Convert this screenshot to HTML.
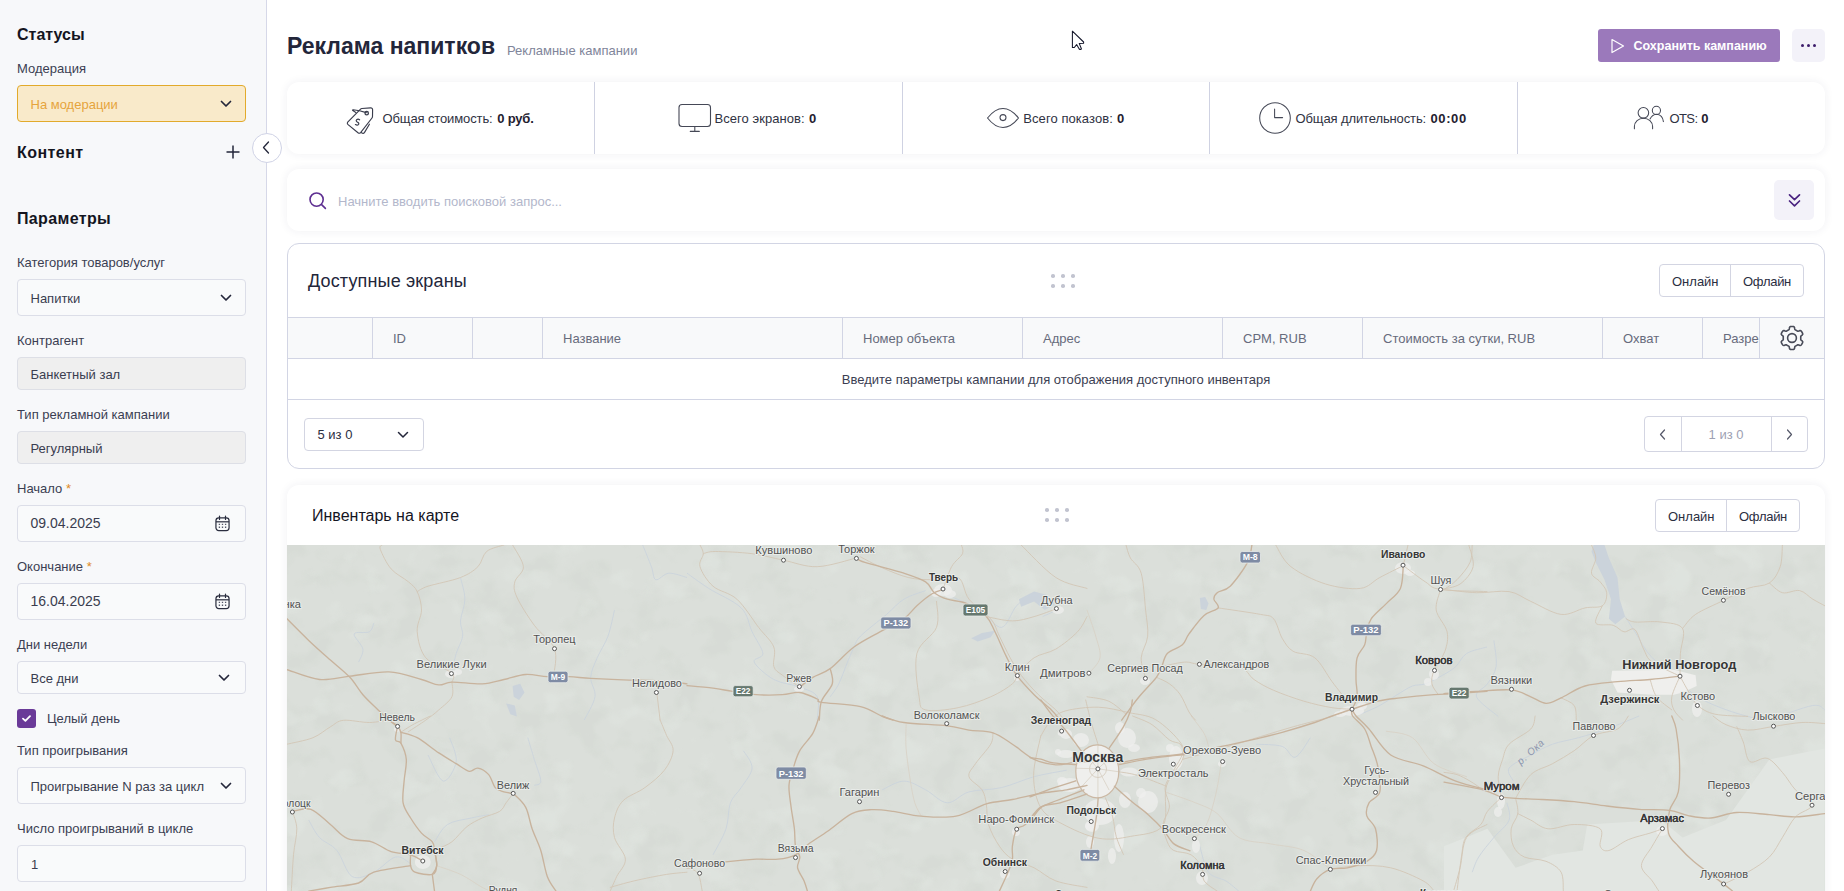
<!DOCTYPE html>
<html lang="ru">
<head>
<meta charset="utf-8">
<title>Реклама напитков</title>
<style>
*{box-sizing:border-box;margin:0;padding:0}
html,body{width:1844px;height:891px;overflow:hidden;background:#fff}
body{font-family:"Liberation Sans",sans-serif;font-size:13px;color:#2b2e3f;position:relative}
.abs{position:absolute}
.t{position:absolute;white-space:nowrap;line-height:1}
#side{position:absolute;left:0;top:0;width:267px;height:891px;background:#f7f8fa;border-right:1px solid #d6d8e8}
.h{font-size:16px;font-weight:700;color:#14151f}
.lb{font-size:13px;color:#3b3e52}
.box{position:absolute;left:17px;width:229px;border:1px solid #dcdee8;border-radius:4px;background:#f9fafb}
.box.dis{background:#efefef;border-color:#dddfe6}
.box .v{position:absolute;left:12.5px;white-space:nowrap;line-height:1;color:#3a3d4f}
.chev{position:absolute}
.req{color:#e08a1e}
/* main */
.card{position:absolute;left:287px;width:1538px;background:#fff;border-radius:12px;box-shadow:0 0 10px rgba(40,40,90,.07)}
.stat{color:#2f3242}
b.stat{color:#1f2130;font-weight:700}
.vdiv{position:absolute;top:0;width:1px;height:72px;background:#cfd2e2}
.th{position:absolute;top:0;height:40px;border-left:1px solid #d2d5e4}
.th span{position:absolute;left:20px;top:14px;line-height:1;color:#676b7c;white-space:nowrap}
.bgrp{position:absolute;height:33px;border:1px solid #d3d5e2;border-radius:4px;background:#fff}
.bgrp i{position:absolute;top:0;width:1px;height:31px;background:#d3d5e2}
.bgrp span{position:absolute;top:9.8px;line-height:1;white-space:nowrap;color:#2b2e3f;font-size:13px}
.dots{position:absolute;width:26px;height:15px}
.dots i{position:absolute;width:4.4px;height:4.4px;border-radius:40%;background:#c2c4d0}
</style>
</head>
<body>

<!-- ================= SIDEBAR ================= -->
<div id="side">
  <div class="t h" style="left:17px;top:26.8px">Статусы</div>
  <div class="t lb" style="left:17px;top:62px">Модерация</div>
  <div class="box" style="top:85px;height:37px;background:#f9eaca;border-color:#e2aa2b">
    <span class="v" style="top:11.5px;color:#e6a43c">На модерации</span>
    <svg class="chev" style="left:202px;top:14px" width="12" height="8" viewBox="0 0 12 8"><path d="M1.5 1.5 L6 6 L10.5 1.5" fill="none" stroke="#23263a" stroke-width="1.7" stroke-linecap="round" stroke-linejoin="round"/></svg>
  </div>

  <div class="t h" style="left:17px;top:145.2px;letter-spacing:0.45px">Контент</div>
  <svg class="abs" style="left:226px;top:145px" width="14" height="14" viewBox="0 0 14 14"><path d="M7 0.5V13.5M0.5 7H13.5" stroke="#23263a" stroke-width="1.5" fill="none"/></svg>

  <div class="t h" style="left:17px;top:211.2px;letter-spacing:0.36px">Параметры</div>

  <div class="t lb" style="left:17px;top:256px">Категория товаров/услуг</div>
  <div class="box" style="top:279px;height:37px">
    <span class="v" style="top:11.5px">Напитки</span>
    <svg class="chev" style="left:202px;top:14px" width="12" height="8" viewBox="0 0 12 8"><path d="M1.5 1.5 L6 6 L10.5 1.5" fill="none" stroke="#23263a" stroke-width="1.7" stroke-linecap="round" stroke-linejoin="round"/></svg>
  </div>

  <div class="t lb" style="left:17px;top:334px">Контрагент</div>
  <div class="box dis" style="top:357px;height:33px">
    <span class="v" style="top:10px">Банкетный зал</span>
  </div>

  <div class="t lb" style="left:17px;top:408px">Тип рекламной кампании</div>
  <div class="box dis" style="top:431px;height:33px">
    <span class="v" style="top:10px">Регулярный</span>
  </div>

  <div class="t lb" style="left:17px;top:482px">Начало <span class="req">*</span></div>
  <div class="box" style="top:505px;height:37px">
    <span class="v" style="top:10px;font-size:14px">09.04.2025</span>
    <svg class="abs cal" style="left:196.5px;top:9px" width="15" height="17" viewBox="0 0 16 18"><g fill="none" stroke="#2b2e3f" stroke-width="1.3"><rect x="1" y="3" width="14" height="13.5" rx="3"/><path d="M1 7.2H15"/><path d="M4.8 1V4.6M11.2 1V4.6" stroke-linecap="round"/><path d="M4 10h1.4M7.3 10h1.4M10.6 10H12M4 13h1.4M7.3 13h1.4M10.6 13H12" stroke-width="1.4" stroke="#555869"/></g></svg>
  </div>

  <div class="t lb" style="left:17px;top:560px">Окончание <span class="req">*</span></div>
  <div class="box" style="top:583px;height:37px">
    <span class="v" style="top:10px;font-size:14px">16.04.2025</span>
    <svg class="abs cal" style="left:196.5px;top:9px" width="15" height="17" viewBox="0 0 16 18"><g fill="none" stroke="#2b2e3f" stroke-width="1.3"><rect x="1" y="3" width="14" height="13.5" rx="3"/><path d="M1 7.2H15"/><path d="M4.8 1V4.6M11.2 1V4.6" stroke-linecap="round"/><path d="M4 10h1.4M7.3 10h1.4M10.6 10H12M4 13h1.4M7.3 13h1.4M10.6 13H12" stroke-width="1.4" stroke="#555869"/></g></svg>
  </div>

  <div class="t lb" style="left:17px;top:638px">Дни недели</div>
  <div class="box" style="top:661px;height:33px">
    <span class="v" style="top:10px">Все дни</span>
    <svg class="chev" style="left:200px;top:12px" width="12" height="8" viewBox="0 0 12 8"><path d="M1.5 1.5 L6 6 L10.5 1.5" fill="none" stroke="#23263a" stroke-width="1.7" stroke-linecap="round" stroke-linejoin="round"/></svg>
  </div>

  <div class="abs" style="left:17px;top:709px;width:19px;height:19px;border-radius:3px;background:#6a3a98">
    <svg class="abs" style="left:5px;top:6px" width="9" height="7" viewBox="0 0 9 7"><path d="M1 3.6 L3.4 5.8 L8 1.2" fill="none" stroke="#fff" stroke-width="1.8" stroke-linecap="round" stroke-linejoin="round"/></svg>
  </div>
  <div class="t lb" style="left:47px;top:712px">Целый день</div>

  <div class="t lb" style="left:17px;top:744px">Тип проигрывания</div>
  <div class="box" style="top:767px;height:37px">
    <span class="v" style="top:11.5px">Проигрывание N раз за цикл</span>
    <svg class="chev" style="left:202px;top:14px" width="12" height="8" viewBox="0 0 12 8"><path d="M1.5 1.5 L6 6 L10.5 1.5" fill="none" stroke="#23263a" stroke-width="1.7" stroke-linecap="round" stroke-linejoin="round"/></svg>
  </div>

  <div class="t lb" style="left:17px;top:822px">Число проигрываний в цикле</div>
  <div class="box" style="top:845px;height:37px">
    <span class="v" style="top:11.5px;left:13px">1</span>
  </div>
</div>

<!-- collapse handle -->
<div class="abs" style="left:251.5px;top:132.5px;width:30px;height:30px;border-radius:50%;background:#fff;border:1px solid #d0d3e6">
  <svg class="abs" style="left:9.5px;top:7.5px" width="8" height="13" viewBox="0 0 8 13"><path d="M6.5 1 L1.5 6.5 L6.5 12" fill="none" stroke="#23263a" stroke-width="1.3" stroke-linecap="round" stroke-linejoin="round"/></svg>
</div>


<!-- ================= MAIN ================= -->
<div class="t" style="left:287px;top:35px;font-size:23px;font-weight:700;color:#23263a">Реклама напитков</div>
<div class="t" style="left:507px;top:44px;font-size:13px;color:#80859a">Рекламные кампании</div>

<!-- save button -->
<div class="abs" style="left:1598px;top:29px;width:182px;height:33px;border-radius:3px;background:#9b79bb">
  <svg class="abs" style="left:12px;top:9px" width="16" height="16" viewBox="0 0 16 16"><path d="M2 1.5 L13.5 8 L2 14.5 Z" fill="none" stroke="#fff" stroke-width="1.2" stroke-linejoin="round"/></svg>
  <span class="t" style="left:35.5px;top:11.3px;font-size:12.5px;font-weight:700;color:#fff">Сохранить кампанию</span>
</div>
<div class="abs" style="left:1792px;top:29px;width:33px;height:33px;border-radius:5px;background:#f3f2f9">
  <i class="abs" style="left:9.2px;top:15.2px;width:3px;height:3px;border-radius:50%;background:#3d1d6b"></i>
  <i class="abs" style="left:15.2px;top:15.2px;width:3px;height:3px;border-radius:50%;background:#3d1d6b"></i>
  <i class="abs" style="left:21.2px;top:15.2px;width:3px;height:3px;border-radius:50%;background:#3d1d6b"></i>
</div>

<!-- cursor -->
<svg class="abs" style="left:1068px;top:28px" width="20" height="26" viewBox="1068 28 20 26"><path d="M1072.4 31.2 L1072.4 47.5 L1074.3 47.5 L1076.6 44.6 L1079.2 49 Q1080.4 50 1081.4 48.8 L1079.2 43.4 L1083.6 43.2 L1083.6 42 Z" fill="#fff" stroke="#14162a" stroke-width="1.05" stroke-linejoin="round"/></svg>

<!-- stats card -->
<div class="card" style="top:82px;height:72px">
  <i class="vdiv" style="left:307px"></i>
  <i class="vdiv" style="left:615px"></i>
  <i class="vdiv" style="left:922px"></i>
  <i class="vdiv" style="left:1230px"></i>

  <!-- tag icon -->
  <svg class="abs" style="left:59px;top:24px" width="28" height="29" viewBox="346 105 28 29" fill="none" stroke="#3a3d4d" stroke-width="1.15" stroke-linejoin="round" stroke-linecap="round">
    <path d="M361.9 107.5 L370.6 106.9 Q372.6 106.8 372.6 108.8 L372.5 115.6 Q372.5 116.4 372 117 L360.6 131.6 Q359.4 132.8 358 131.8 L347.8 123.4 Q346.8 122.4 347.7 121.2 L360.3 108.3 Q361 107.6 361.9 107.5 Z"/>
    <path d="M369.4 123.2 L364.4 131.6 Q363.6 132.6 362.4 132.2 L361.2 131.6"/>
    <circle cx="366.7" cy="112.2" r="1.7" stroke-width="1.3"/>
    <path d="M366.2 111.6 L359.6 109.7 L353.2 108.7 Q352 108.8 352.8 109.6 L355.8 111.4"/>
    <path d="M359.6 118.8 Q358 117.6 356.6 118.8 Q355.6 120 357.2 121 Q359.4 122 358.6 123.4 Q357.4 124.8 355.4 123.6"/>
  </svg>
  <span class="t stat" style="left:95.5px;top:30px;letter-spacing:-0.12px">Общая стоимость:</span><b class="t stat" style="left:210.3px;top:30px;letter-spacing:-0.2px">0 руб.</b>

  <!-- monitor icon -->
  <svg class="abs" style="left:391px;top:21px" width="34" height="30" viewBox="0 0 34 30" fill="none" stroke="#454856" stroke-width="1.1" stroke-linecap="round">
    <rect x="1" y="1.5" width="31.5" height="22" rx="3"/>
    <path d="M16.8 23.5V28.2M12.3 28.4H21.3"/>
  </svg>
  <span class="t stat" style="left:427.5px;top:30px;letter-spacing:0.06px">Всего экранов:</span><b class="t stat" style="left:522px;top:30px">0</b>

  <!-- eye icon -->
  <svg class="abs" style="left:699px;top:25px" width="34" height="22" viewBox="0 0 34 22" fill="none" stroke="#454856" stroke-width="1.05" stroke-linejoin="round">
    <path d="M1.5 11 Q9 1.5 17 1.5 Q25 1.5 32.5 11 Q25 20.5 17 20.5 Q9 20.5 1.5 11 Z"/>
    <circle cx="17" cy="10.6" r="3"/>
  </svg>
  <span class="t stat" style="left:736.3px;top:30px;letter-spacing:0.07px">Всего показов:</span><b class="t stat" style="left:830.1px;top:30px">0</b>

  <!-- clock icon -->
  <svg class="abs" style="left:970.8px;top:19.2px" width="34" height="34" viewBox="0 0 34 34" fill="none" stroke="#454856" stroke-width="1.05" stroke-linecap="round" stroke-linejoin="round">
    <circle cx="17" cy="17" r="15.3"/>
    <path d="M16.6 8V16.6H24.6"/>
  </svg>
  <span class="t stat" style="left:1008.5px;top:30px;letter-spacing:-0.115px">Общая длительность:</span><b class="t stat" style="left:1143.5px;top:30px;letter-spacing:0.6px">00:00</b>

  <!-- users icon -->
  <svg class="abs" style="left:1345px;top:22px" width="34" height="27" viewBox="1632 104 34 27" fill="none" stroke="#454856" stroke-width="1.05" stroke-linecap="round" stroke-linejoin="round">
    <circle cx="1643.4" cy="112.8" r="5.3"/>
    <path d="M1634.4 128.8 V126.6 A9.1 8.4 0 0 1 1652.6 126.6 V128.8"/>
    <circle cx="1656.4" cy="110.4" r="4.1"/>
    <path d="M1650 118.9 Q1652.4 114.4 1656.6 114.2 Q1662.6 114.6 1663.4 121.6"/>
  </svg>
  <span class="t stat" style="left:1382.5px;top:30px;letter-spacing:-0.6px">OTS:</span><b class="t stat" style="left:1414.3px;top:30px">0</b>
</div>

<!-- search card -->
<div class="card" style="top:169px;height:62px">
  <svg class="abs" style="left:21px;top:22px" width="19" height="19" viewBox="0 0 19 19" fill="none" stroke="#5e2f91" stroke-width="1.6" stroke-linecap="round"><circle cx="8.6" cy="8.6" r="6.6"/><path d="M13.6 13.6 L17.4 17.4"/></svg>
  <span class="t" style="left:51px;top:26px;color:#b3b7cb">Начните вводить поисковой запрос...</span>
  <div class="abs" style="left:1487px;top:11px;width:40px;height:40px;border-radius:5px;background:#f3f2f9">
    <svg class="abs" style="left:14px;top:13px" width="13" height="15" viewBox="0 0 13 15" fill="none" stroke="#4a2380" stroke-width="1.7" stroke-linecap="round" stroke-linejoin="round"><path d="M1.5 1.8 L6.5 6.6 L11.5 1.8M1.5 8 L6.5 12.8 L11.5 8"/></svg>
  </div>
</div>

<!-- table card -->
<div class="card" style="top:243px;height:226px;box-shadow:none;border:1px solid #d2d5e4;overflow:hidden">
  <span class="t" style="left:20px;top:28px;font-size:18px;color:#23263a;letter-spacing:0.15px">Доступные экраны</span>
  <div class="dots" style="left:762px;top:29px"><i style="left:.8px;top:.8px"></i><i style="left:10.8px;top:.8px"></i><i style="left:20.8px;top:.8px"></i><i style="left:.8px;top:10.8px"></i><i style="left:10.8px;top:10.8px"></i><i style="left:20.8px;top:10.8px"></i></div>
  <div class="bgrp" style="left:1371px;top:20px;width:145px"><span style="left:12px">Онлайн</span><i style="left:70px"></i><span style="left:83px;letter-spacing:-0.3px">Офлайн</span></div>

  <div class="abs" style="left:-1px;top:73px;width:1538px;height:42px;background:#f8f9fa;border-top:1px solid #d2d5e4;border-bottom:1px solid #d2d5e4">
    <div class="th" style="left:85px;width:100px"><span>ID</span></div>
    <div class="th" style="left:185px;width:70px"></div>
    <div class="th" style="left:255px;width:300px"><span>Название</span></div>
    <div class="th" style="left:555px;width:180px"><span>Номер объекта</span></div>
    <div class="th" style="left:735px;width:200px"><span>Адрес</span></div>
    <div class="th" style="left:935px;width:140px"><span>CPM, RUB</span></div>
    <div class="th" style="left:1075px;width:240px"><span>Стоимость за сутки, RUB</span></div>
    <div class="th" style="left:1315px;width:100px"><span>Охват</span></div>
    <div class="th" style="left:1415px;width:57px;overflow:hidden"><span>Разрешение</span></div>
    <div class="th" style="left:1472px;width:66px">
      <svg class="abs" style="left:19px;top:7px" width="26" height="26" viewBox="0 0 26 26" fill="none" stroke="#484b58" stroke-width="1.6" stroke-linejoin="round"><path d="M21.75 13.00 L21.75 12.69 L21.73 12.39 L21.72 12.08 L21.71 11.78 L21.74 11.46 L21.92 11.10 L22.43 10.65 L23.17 10.08 L23.63 9.55 L23.73 9.09 L23.67 8.69 L23.54 8.31 L23.38 7.94 L23.20 7.58 L23.00 7.23 L22.79 6.88 L22.57 6.54 L22.33 6.22 L22.07 5.92 L21.75 5.66 L21.31 5.52 L20.61 5.65 L19.75 6.01 L19.11 6.22 L18.71 6.20 L18.41 6.07 L18.15 5.91 L17.90 5.74 L17.64 5.58 L17.38 5.42 L17.11 5.27 L16.84 5.13 L16.56 4.99 L16.29 4.85 L16.04 4.66 L15.82 4.32 L15.68 3.65 L15.56 2.74 L15.32 2.07 L14.98 1.75 L14.60 1.60 L14.21 1.53 L13.81 1.48 L13.40 1.46 L13.00 1.45 L12.60 1.46 L12.19 1.48 L11.79 1.53 L11.40 1.60 L11.02 1.75 L10.68 2.07 L10.44 2.74 L10.32 3.65 L10.18 4.32 L9.96 4.66 L9.71 4.85 L9.44 4.99 L9.16 5.13 L8.89 5.27 L8.63 5.42 L8.36 5.58 L8.10 5.74 L7.85 5.91 L7.59 6.07 L7.29 6.20 L6.89 6.22 L6.25 6.01 L5.39 5.65 L4.69 5.52 L4.25 5.66 L3.93 5.92 L3.67 6.22 L3.43 6.54 L3.21 6.88 L3.00 7.23 L2.80 7.58 L2.62 7.94 L2.46 8.31 L2.33 8.69 L2.27 9.09 L2.37 9.55 L2.83 10.08 L3.57 10.65 L4.08 11.10 L4.26 11.46 L4.29 11.78 L4.28 12.08 L4.27 12.39 L4.25 12.69 L4.25 13.00 L4.25 13.31 L4.27 13.61 L4.28 13.92 L4.29 14.22 L4.26 14.54 L4.08 14.90 L3.57 15.35 L2.83 15.92 L2.37 16.45 L2.27 16.91 L2.33 17.31 L2.46 17.69 L2.62 18.06 L2.80 18.42 L3.00 18.78 L3.21 19.12 L3.43 19.46 L3.67 19.78 L3.93 20.08 L4.25 20.34 L4.69 20.48 L5.39 20.35 L6.25 19.99 L6.89 19.78 L7.29 19.80 L7.59 19.93 L7.85 20.09 L8.10 20.26 L8.36 20.42 L8.62 20.58 L8.89 20.73 L9.16 20.87 L9.44 21.01 L9.71 21.15 L9.96 21.34 L10.18 21.68 L10.32 22.35 L10.44 23.26 L10.68 23.93 L11.02 24.25 L11.40 24.40 L11.79 24.47 L12.19 24.52 L12.60 24.54 L13.00 24.55 L13.40 24.54 L13.81 24.52 L14.21 24.47 L14.60 24.40 L14.98 24.25 L15.32 23.93 L15.56 23.26 L15.68 22.35 L15.82 21.68 L16.04 21.34 L16.29 21.15 L16.56 21.01 L16.84 20.87 L17.11 20.73 L17.38 20.58 L17.64 20.42 L17.90 20.26 L18.15 20.09 L18.41 19.93 L18.71 19.80 L19.11 19.78 L19.75 19.99 L20.61 20.35 L21.31 20.48 L21.75 20.34 L22.07 20.08 L22.33 19.78 L22.57 19.46 L22.79 19.12 L23.00 18.78 L23.20 18.42 L23.38 18.06 L23.54 17.69 L23.67 17.31 L23.73 16.91 L23.63 16.45 L23.17 15.92 L22.43 15.35 L21.92 14.90 L21.74 14.54 L21.71 14.22 L21.72 13.92 L21.73 13.61 L21.75 13.31 Z"/><circle cx="13" cy="13" r="4.4"/></svg>
    </div>
  </div>
  <div class="abs" style="left:-1px;top:115px;width:1538px;height:41px;border-bottom:1px solid #d2d5e4;text-align:center">
    <span style="display:inline-block;line-height:1;margin-top:14px;color:#3b3e52">Введите параметры кампании для отображения доступного инвентаря</span>
  </div>

  <div class="abs" style="left:16px;top:174px;width:120px;height:33px;border:1px solid #d3d5e2;border-radius:4px">
    <span class="t" style="left:12.5px;top:9px;color:#2b2e3f">5 из 0</span>
    <svg class="abs" style="left:92px;top:12px" width="12" height="8" viewBox="0 0 12 8"><path d="M1.5 1.5 L6 6 L10.5 1.5" fill="none" stroke="#23263a" stroke-width="1.5" stroke-linecap="round" stroke-linejoin="round"/></svg>
  </div>

  <div class="abs" style="left:1356px;top:172px;width:164px;height:36px;border:1px solid #d3d5e2;border-radius:4px">
    <i class="abs" style="left:35.5px;top:0;width:1px;height:34px;background:#d3d5e2"></i>
    <i class="abs" style="left:126px;top:0;width:1px;height:34px;background:#d3d5e2"></i>
    <svg class="abs" style="left:14px;top:12px" width="7" height="11" viewBox="0 0 7 11"><path d="M5.5 1 L1.5 5.5 L5.5 10" fill="none" stroke="#555869" stroke-width="1.2" stroke-linecap="round" stroke-linejoin="round"/></svg>
    <span class="t" style="left:36px;width:90px;text-align:center;top:10.5px;color:#9da1b3">1 из 0</span>
    <svg class="abs" style="left:141px;top:12px" width="7" height="11" viewBox="0 0 7 11"><path d="M1.5 1 L5.5 5.5 L1.5 10" fill="none" stroke="#555869" stroke-width="1.2" stroke-linecap="round" stroke-linejoin="round"/></svg>
  </div>
</div>

<!-- map card -->
<div class="card" style="top:485px;height:420px;border-radius:12px 12px 0 0;overflow:visible">
  <span class="t" style="left:25px;top:23px;font-size:16px;color:#14151f">Инвентарь на карте</span>
  <div class="dots" style="left:757px;top:22px"><i style="left:.8px;top:.8px"></i><i style="left:10.8px;top:.8px"></i><i style="left:20.8px;top:.8px"></i><i style="left:.8px;top:10.8px"></i><i style="left:10.8px;top:10.8px"></i><i style="left:20.8px;top:10.8px"></i></div>
  <div class="bgrp" style="left:1368px;top:14px;width:145px"><span style="left:12px">Онлайн</span><i style="left:70px"></i><span style="left:83px;letter-spacing:-0.3px">Офлайн</span></div>
  <div id="map" class="abs" style="left:0;top:60px;width:1538px;height:346px;background:#dce0db;overflow:hidden">
<!-- MAP-START -->
<svg class="abs" style="left:0;top:0" width="1538" height="346" viewBox="287 545 1538 346" font-family="'Liberation Sans',sans-serif">
<defs><filter id="tex" x="0" y="0" width="100%" height="100%" color-interpolation-filters="sRGB"><feTurbulence type="fractalNoise" baseFrequency="0.03 0.034" numOctaves="3" seed="7" result="n"/><feColorMatrix in="n" type="matrix" values="0 0 0 0 0.835  0 0 0 0 0.855  0 0 0 0 0.83  5 0 0 0 -2.45"/></filter><filter id="tex2" x="0" y="0" width="100%" height="100%" color-interpolation-filters="sRGB"><feTurbulence type="fractalNoise" baseFrequency="0.026 0.03" numOctaves="3" seed="23" result="n"/><feColorMatrix in="n" type="matrix" values="0 0 0 0 0.885  0 0 0 0 0.905  0 0 0 0 0.885  0 5 0 0 -2.9"/></filter></defs>
<rect x="287" y="545" width="1538" height="346" fill="#dbdfda"/>
<rect x="287" y="545" width="1538" height="346" filter="url(#tex)" opacity="0.6"/>
<rect x="287" y="545" width="1538" height="346" filter="url(#tex2)" opacity="0.55"/>
<polygon points="1587.2,824.5 1660.9,820.1 1682.6,837.5 1726.0,820.1 1769.4,759.4 1824.7,748.5 1824.7,891.1 1444.0,891.1 1444.0,846.2 1487.4,828.8 1515.6,867.8 1552.5,854.8 1582.8,850.5" fill="#e2e6e2"/>
<polygon points="1593.7,545.0 1604.5,545.0 1608.9,558.0 1617.5,577.5 1619.7,599.2 1625.1,616.6 1615.4,624.2 1608.9,618.8 1611.0,599.2 1604.5,579.7 1595.8,562.4 1591.5,551.5" fill="#cbd3db"/>
<polygon points="1018.9,599.2 1034.1,591.6 1047.1,594.9 1055.8,603.6 1044.9,610.1 1034.1,601.4 1021.1,606.8" fill="#cbd3db"/>
<polygon points="971.2,638.3 982.0,632.9 995.0,630.7 990.7,637.2 977.7,641.5" fill="#cbd3db"/>
<polygon points="1199.8,598.1 1205.2,597.1 1208.5,603.6 1206.3,610.1 1200.9,609.0" fill="#cbd3db"/>
<polygon points="512.6,686.0 520.2,683.8 524.5,692.5 519.1,700.1 513.7,696.8" fill="#cbd3db"/>
<polygon points="506.1,703.4 514.8,705.5 516.9,716.4 510.4,714.2" fill="#cbd3db"/>
<g fill="none" stroke="#cbd4dd" stroke-width="0.9" stroke-linejoin="round">
<path d="M460.5 577.5 C461.2 581.1 464.9 592.0 464.9 599.2 C464.9 606.4 460.9 614.8 460.5 620.9 C460.1 627.0 463.4 630.7 462.7 636.1 C462.0 641.5 458.0 647.4 456.2 653.5 C454.4 659.6 452.6 669.8 451.9 673.0"/>
<path d="M614.5 610.1 C613.4 614.4 610.9 628.2 608.0 636.1 C605.1 644.0 600.1 650.9 597.2 657.8 C594.3 664.7 591.1 670.8 590.7 677.3 C590.3 683.8 596.1 689.7 595.0 696.8 C593.9 703.9 586.0 716.2 584.2 720.1"/>
<path d="M642.7 545.0 C644.2 548.6 649.2 560.9 651.4 566.7 C653.6 572.5 652.9 578.6 655.8 579.7 C658.7 580.8 663.6 573.6 668.8 573.2 C674.0 572.8 684.0 576.8 687.0 577.5"/>
<path d="M373.8 623.1 C373.1 624.5 372.7 630.0 369.4 631.8 C366.1 633.6 355.3 631.0 354.2 633.9 C353.1 636.8 362.2 644.4 362.9 649.1 C363.6 653.8 359.3 659.9 358.6 662.1"/>
<path d="M687.0 573.2 C690.6 575.7 699.7 582.6 708.7 588.4 C717.7 594.2 734.0 600.7 741.2 607.9 C748.4 615.1 748.5 624.2 752.1 631.8 C755.7 639.4 762.5 648.5 762.9 653.5 C763.2 658.5 752.4 657.8 754.2 662.1 C756.0 666.4 766.2 675.3 773.8 679.5 C781.4 683.7 792.6 684.2 799.8 687.1 C807.0 690.0 814.3 691.3 817.2 696.8 C820.1 702.3 817.2 716.2 817.2 720.1"/>
<path d="M854.0 647.0 C852.9 649.5 850.0 656.0 847.5 662.1 C845.0 668.2 841.7 678.0 838.8 683.8 C835.9 689.6 831.6 694.6 830.2 696.8"/>
<path d="M925.6 590.6 C922.0 592.0 910.4 595.2 903.9 599.2 C897.4 603.2 893.8 608.2 886.6 614.4 C879.4 620.5 865.9 630.7 860.5 636.1 C855.1 641.5 855.1 645.2 854.0 647.0"/>
<path d="M947.3 594.9 C952.7 597.4 970.8 604.7 979.8 610.1 C988.8 615.5 995.4 628.1 1001.5 627.4 C1007.6 626.7 1011.3 611.1 1016.7 605.7 C1022.1 600.3 1027.6 594.5 1034.1 594.9 C1040.6 595.3 1054.4 604.3 1055.8 607.9 C1057.2 611.5 1044.9 615.1 1042.7 616.6"/>
<path d="M1487.0 647.0 C1483.6 648.1 1471.8 650.2 1466.6 653.5 C1461.4 656.8 1459.8 662.9 1455.8 666.5 C1451.8 670.1 1447.8 672.3 1442.7 675.2 C1437.6 678.1 1430.5 682.0 1425.4 683.8 C1420.4 685.6 1417.1 684.2 1412.4 686.0 C1407.7 687.8 1402.6 691.5 1397.2 694.7 C1391.8 698.0 1386.0 702.2 1379.8 705.5 C1373.6 708.8 1363.5 712.8 1360.3 714.2"/>
<path d="M1625.1 616.6 C1626.7 619.1 1630.4 624.9 1634.9 631.8 C1639.4 638.7 1644.7 650.4 1652.2 657.8 C1659.7 665.2 1673.5 670.4 1680.0 676.2 C1686.5 682.0 1685.5 687.6 1691.3 692.5 C1697.1 697.4 1705.7 701.5 1715.1 705.5 C1724.5 709.5 1738.7 714.2 1747.7 716.4 C1756.8 718.6 1758.6 720.3 1769.4 718.5 C1780.2 716.7 1803.6 706.9 1812.8 705.5 C1822.0 704.1 1822.7 709.2 1824.7 709.9"/>
<path d="M1493.9 640.4 C1494.3 644.8 1497.2 659.3 1496.1 666.5 C1495.0 673.7 1490.7 678.8 1487.4 683.8 C1484.1 688.8 1474.7 691.4 1476.5 696.8 C1478.3 702.2 1494.6 713.1 1498.2 716.4"/>
<path d="M308.7 820.1 C310.5 823.0 314.8 832.4 319.5 837.5 C324.2 842.6 331.5 844.0 336.9 850.5 C342.3 857.0 346.0 872.9 352.1 876.5 C358.2 880.1 366.6 875.5 373.8 872.2 C381.0 869.0 389.4 858.5 395.5 857.0 C401.6 855.5 408.1 862.4 410.6 863.5"/>
<path d="M434.5 841.8 C436.7 838.9 441.4 828.5 447.5 824.5 C453.6 820.5 464.5 819.6 471.4 818.0 C478.3 816.4 485.8 815.2 488.7 814.7"/>
<path d="M527.8 737.7 C528.9 741.3 532.1 752.2 534.3 759.4 C536.5 766.6 540.8 776.8 540.8 781.1 C540.8 785.4 535.4 784.7 534.3 785.4"/>
<path d="M428.0 755.0 C430.5 759.4 438.5 780.0 443.2 781.1 C447.9 782.2 455.1 768.8 456.2 761.6 C457.3 754.4 450.8 741.7 449.7 737.7"/>
<path d="M743.4 750.7 C744.9 753.6 752.5 762.0 752.1 768.1 C751.7 774.2 744.8 781.8 741.2 787.6 C737.6 793.4 732.9 795.9 730.4 802.8 C727.9 809.7 728.9 820.1 726.0 828.8 C723.1 837.5 715.2 850.5 713.0 854.8"/>
<path d="M882.2 789.8 C885.8 788.3 896.7 781.1 903.9 781.1 C911.1 781.1 918.4 786.2 925.6 789.8 C932.8 793.4 940.1 802.4 947.3 802.8 C954.5 803.1 960.0 794.4 969.0 791.9 C978.0 789.4 990.6 790.1 1001.5 787.6 C1012.4 785.1 1023.2 779.6 1034.1 776.7 C1044.9 773.8 1061.2 771.3 1066.6 770.2"/>
<path d="M1256.2 744.2 C1260.5 744.6 1275.7 744.2 1282.2 746.4 C1288.7 748.6 1290.5 758.7 1295.2 757.2 C1299.9 755.8 1307.9 741.0 1310.4 737.7"/>
<path d="M1199.8 846.2 C1201.2 850.5 1204.2 866.4 1208.5 872.2 C1212.8 878.0 1220.8 877.8 1225.8 880.9 C1230.8 884.0 1236.6 889.4 1238.8 891.1"/>
<path d="M1513.4 781.1 C1512.7 778.9 1506.2 772.5 1509.1 768.1 C1512.0 763.8 1523.6 759.0 1530.8 755.0 C1538.0 751.0 1544.5 747.1 1552.5 744.2 C1560.5 741.3 1569.5 740.2 1578.5 737.7 C1587.5 735.2 1596.6 732.6 1606.7 729.0 C1616.8 725.4 1633.8 718.2 1639.2 716.0"/>
<path d="M1506.9 802.8 C1507.3 805.7 1511.3 814.3 1509.1 820.1 C1506.9 825.9 1499.0 831.4 1493.9 837.5 C1488.8 843.6 1482.3 851.2 1478.7 857.0 C1475.1 862.8 1473.3 869.7 1472.2 872.2"/>
</g>
<g fill="#efefed">
<polygon points="1612.1,670.8 1673.9,669.7 1695.6,675.2 1696.7,686.0 1682.6,692.5 1673.9,694.7 1652.2,694.7 1617.5,692.5 1611.0,679.5"/>
<ellipse cx="1097.3" cy="771.4" rx="21.5" ry="26.5"/>
<ellipse cx="1127" cy="738" rx="9" ry="10" opacity="0.75"/>
<ellipse cx="1120" cy="728" rx="5" ry="6" opacity="0.75"/>
<ellipse cx="1134" cy="748" rx="6" ry="4" opacity="0.75"/>
<ellipse cx="1066" cy="754" rx="9" ry="4" opacity="0.75"/>
<ellipse cx="1058" cy="752" rx="3" ry="3" opacity="0.75"/>
<ellipse cx="1081" cy="740" rx="8" ry="7" opacity="0.75"/>
<ellipse cx="1066" cy="734" rx="6" ry="5" opacity="0.75"/>
<ellipse cx="1070" cy="785" rx="12" ry="7" opacity="0.75"/>
<ellipse cx="1062" cy="781" rx="5" ry="4" opacity="0.75"/>
<ellipse cx="1100" cy="812" rx="16" ry="13" opacity="0.75"/>
<ellipse cx="1092" cy="826" rx="7" ry="6" opacity="0.75"/>
<ellipse cx="1119" cy="838" rx="5" ry="14" opacity="0.75"/>
<ellipse cx="1148" cy="802" rx="10" ry="11" opacity="0.75"/>
<ellipse cx="1141" cy="793" rx="5" ry="5" opacity="0.75"/>
<ellipse cx="1129" cy="772" rx="9" ry="4.5" opacity="0.75"/>
<ellipse cx="1176" cy="758" rx="7" ry="12" opacity="0.75"/>
<ellipse cx="1170" cy="748" rx="4" ry="4" opacity="0.75"/>
<ellipse cx="1125" cy="800" rx="6" ry="8" opacity="0.75"/>
<ellipse cx="1112" cy="856" rx="4" ry="8" opacity="0.75"/>
<ellipse cx="1090" cy="842" rx="4" ry="6" opacity="0.75"/>
<ellipse cx="422.8" cy="862" rx="8" ry="7" opacity="0.75"/>
<ellipse cx="943" cy="590" rx="9" ry="6" opacity="0.75"/>
<ellipse cx="936" cy="593" rx="5" ry="4" opacity="0.75"/>
<ellipse cx="950" cy="594" rx="6" ry="4" opacity="0.75"/>
<ellipse cx="1403" cy="568" rx="8" ry="6" opacity="0.75"/>
<ellipse cx="1410" cy="573" rx="5" ry="3" opacity="0.75"/>
<ellipse cx="1352" cy="711" rx="12" ry="5" opacity="0.75"/>
<ellipse cx="1340" cy="714" rx="6" ry="3" opacity="0.75"/>
<ellipse cx="1362" cy="706" rx="5" ry="4" opacity="0.75"/>
<ellipse cx="1434" cy="674" rx="5" ry="6" opacity="0.75"/>
<ellipse cx="1428" cy="682" rx="4" ry="4" opacity="0.75"/>
<ellipse cx="451" cy="674" rx="6" ry="4" opacity="0.75"/>
<ellipse cx="458" cy="672" rx="4" ry="3" opacity="0.75"/>
<ellipse cx="1697" cy="709" rx="5" ry="8" opacity="0.75"/>
<ellipse cx="1501" cy="801" rx="4" ry="8" opacity="0.75"/>
<ellipse cx="1498" cy="812" rx="4" ry="5" opacity="0.75"/>
<ellipse cx="1662" cy="831" rx="6" ry="5" opacity="0.75"/>
<ellipse cx="1145" cy="681" rx="5" ry="4" opacity="0.75"/>
<ellipse cx="799" cy="689" rx="5" ry="3" opacity="0.75"/>
<ellipse cx="1058" cy="610" rx="6" ry="4" opacity="0.75"/>
<ellipse cx="1202" cy="878" rx="6" ry="7" opacity="0.75"/>
<ellipse cx="1196" cy="846" rx="4" ry="7" opacity="0.75"/>
<ellipse cx="1222" cy="764" rx="4" ry="3" opacity="0.75"/>
<ellipse cx="1017" cy="678" rx="3" ry="3" opacity="0.75"/>
<ellipse cx="397" cy="729" rx="3" ry="3" opacity="0.75"/>
<ellipse cx="1061.6" cy="733" rx="4" ry="3" opacity="0.75"/>
<ellipse cx="1091" cy="826" rx="6" ry="5" opacity="0.75"/>
<ellipse cx="1005" cy="874" rx="5" ry="5" opacity="0.75"/>
<ellipse cx="1016" cy="832" rx="4" ry="4" opacity="0.75"/>
</g>
<g fill="none" stroke="#d8d0c4" stroke-width="0.8" stroke-linejoin="round" stroke-linecap="round">
<path d="M1087.0 610.1 C1088.5 614.4 1093.5 628.2 1095.7 636.1 C1097.9 644.0 1101.1 651.6 1100.0 657.8 C1098.9 663.9 1091.0 670.5 1089.2 673.0"/>
<path d="M436.7 865.7 C440.7 867.2 452.9 870.8 460.5 874.4 C468.1 878.0 477.1 884.6 482.2 887.4 C487.3 890.2 489.4 890.5 490.9 891.1"/>
<path d="M906.1 724.7 C906.1 728.7 905.4 739.1 906.1 748.5 C906.8 757.9 909.0 772.1 910.4 781.1 C911.8 790.1 913.0 796.9 914.8 802.8 C916.6 808.6 920.2 814.0 921.3 816.2"/>
<path d="M1386.3 731.2 C1390.7 732.3 1404.4 732.3 1412.4 737.7 C1420.4 743.1 1425.1 757.2 1434.1 763.7 C1443.1 770.2 1461.2 774.5 1466.6 776.7"/>
<path d="M1191.1 716.0 C1193.3 718.9 1201.2 728.3 1204.1 733.4 C1207.0 738.5 1207.8 744.2 1208.5 746.4"/>
<path d="M1221.5 761.6 C1220.8 765.9 1219.0 778.9 1217.2 787.6 C1215.4 796.3 1212.8 806.7 1210.6 813.6 C1208.4 820.5 1206.8 824.6 1204.1 828.8 C1201.4 833.0 1196.0 837.0 1194.4 838.6"/>
<path d="M1165.1 791.9 C1170.2 793.7 1186.8 799.2 1195.5 802.8 C1204.2 806.4 1210.0 807.8 1217.2 813.6 C1224.4 819.4 1229.8 832.4 1238.8 837.5 C1247.8 842.6 1260.6 841.8 1271.4 844.0 C1282.2 846.2 1294.1 846.3 1303.9 850.5 C1313.7 854.7 1326.0 866.2 1330.4 869.4"/>
<path d="M1097.9 768.8 L1097.9 744.9"/>
<path d="M1097.9 768.8 L1114.4 753.9"/>
<path d="M1097.9 768.8 L1118.9 771.8"/>
<path d="M1097.9 768.8 L1109.0 789.8"/>
<path d="M1097.9 768.8 L1097.9 797.8"/>
<path d="M1097.9 768.8 L1082.1 786.2"/>
<path d="M1097.9 768.8 L1075.8 768.2"/>
<path d="M1097.9 768.8 L1083.9 752.1"/>
</g>
<g fill="none" stroke="#d2c6b6" stroke-width="0.9" stroke-linejoin="round" stroke-linecap="round">
<path d="M451.9 682.1 C451.9 680.6 456.2 677.0 451.9 673.0 C447.5 669.0 431.6 664.7 425.8 657.8 C420.0 650.9 417.9 639.8 417.2 631.8 C416.5 623.8 421.5 616.8 421.5 610.1 C421.5 603.4 419.4 596.3 417.2 591.6 C415.0 586.9 412.9 585.7 408.5 581.9 C404.1 578.1 395.8 574.3 391.1 568.9 C386.4 563.5 381.8 553.3 380.3 549.3 C378.9 545.3 382.0 545.7 382.4 545.0"/>
<path d="M417.2 591.6 C419.0 590.7 420.8 588.6 428.0 586.2 C435.2 583.9 452.2 580.8 460.5 577.5 C468.8 574.2 473.5 571.0 477.9 566.7 C482.2 562.4 482.3 555.1 486.6 551.5 C490.9 547.9 501.0 546.1 503.9 545.0"/>
<path d="M553.8 675.2 C553.9 670.8 557.8 657.0 554.5 648.7 C551.2 640.4 540.6 633.9 534.3 625.3 C528.0 616.7 520.1 604.3 516.9 597.1 C513.6 589.9 513.7 587.0 514.8 581.9 C515.9 576.8 523.8 572.9 523.4 566.7 C523.0 560.6 514.4 548.6 512.6 545.0"/>
<path d="M451.9 682.1 C451.9 684.5 454.1 692.2 451.9 696.8 C449.7 701.4 443.1 706.0 438.8 709.9 C434.5 713.8 430.9 716.5 425.8 720.1 C420.8 723.7 411.4 729.7 408.5 731.6"/>
<path d="M656.8 692.5 L660.1 720.1"/>
<path d="M860.5 556.9 C864.1 558.7 874.2 564.4 882.2 567.8 C890.2 571.2 900.0 575.5 908.3 577.5 C916.6 579.5 923.8 579.7 932.1 579.7 C940.4 579.7 952.0 574.2 958.1 577.5 C964.2 580.8 963.6 592.3 969.0 599.2 C974.4 606.1 985.6 612.6 990.7 618.8 C995.8 624.9 996.1 629.6 999.4 636.1 C1002.6 642.6 1006.6 651.3 1010.2 657.8 C1013.8 664.3 1016.4 669.1 1021.1 675.2 C1025.8 681.4 1032.6 688.9 1038.4 694.7 C1044.2 700.5 1051.5 705.7 1055.8 709.9 C1060.1 714.1 1063.0 718.4 1064.4 720.1"/>
<path d="M943.0 589.5 C944.4 585.7 948.4 572.7 951.6 566.7 C954.9 560.7 960.9 557.3 962.5 553.7 C964.1 550.1 961.6 546.5 961.4 545.0"/>
<path d="M700.0 545.0 C700.5 546.5 703.3 550.1 703.3 553.7 C703.3 557.3 698.4 561.3 700.0 566.7 C701.6 572.1 706.9 580.8 713.0 586.2 C719.1 591.6 729.3 592.3 736.9 599.2 C744.5 606.1 752.5 619.4 758.6 627.4 C764.8 635.4 771.3 640.5 773.8 647.0 C776.3 653.5 772.4 661.8 773.8 666.5 C775.2 671.2 778.1 671.8 782.4 675.2 C786.7 678.6 796.9 685.1 799.8 687.1"/>
<path d="M703.3 553.7 C705.3 553.3 707.1 551.5 715.2 551.5 C723.3 551.5 740.7 552.2 752.1 553.7 C763.5 555.2 772.6 558.0 783.5 560.2 C794.4 562.4 805.1 567.1 817.2 566.7 C829.3 566.3 849.7 559.5 856.2 558.0"/>
<path d="M936.5 601.4 C936.5 605.7 939.8 618.7 936.5 627.4 C933.2 636.1 919.8 641.9 916.9 653.5 C914.0 665.1 917.6 687.4 919.1 696.8 C920.6 706.2 919.1 708.1 925.6 709.9 C932.1 711.7 947.2 709.9 958.1 707.7 C969.0 705.5 981.7 700.8 990.7 696.8 C999.8 692.8 1008.1 687.4 1012.4 683.8 C1016.7 680.2 1016.0 676.6 1016.7 675.2"/>
<path d="M1016.7 675.2 C1019.6 672.3 1027.6 662.1 1034.1 657.8 C1040.6 653.4 1048.6 653.4 1055.8 649.1 C1063.0 644.8 1072.3 637.2 1077.5 631.8 C1082.7 626.4 1085.4 619.1 1087.0 616.6"/>
<path d="M986.3 616.6 C990.6 617.3 1004.4 620.9 1012.4 620.9 C1020.4 620.9 1026.9 618.6 1034.1 616.6 C1041.3 614.6 1052.2 610.3 1055.8 609.0"/>
<path d="M1021.1 545.0 C1026.9 550.4 1044.8 570.3 1055.8 577.5 C1066.8 584.7 1081.8 586.6 1087.0 588.4"/>
<path d="M1218.2 607.9 C1225.2 609.0 1251.3 612.6 1260.5 614.4 C1269.7 616.2 1270.0 614.8 1273.6 618.8 C1277.2 622.8 1279.0 632.9 1282.2 638.3 C1285.5 643.7 1287.7 648.0 1293.1 651.3 C1298.5 654.5 1308.3 652.7 1314.8 657.8 C1321.3 662.9 1326.7 674.5 1332.1 681.7 C1337.5 688.9 1344.8 698.0 1347.3 701.2"/>
<path d="M1275.7 545.0 C1278.2 548.6 1282.6 560.2 1290.9 566.7 C1299.2 573.2 1314.0 580.4 1325.6 584.0 C1337.2 587.6 1351.3 589.5 1360.3 588.4 C1369.3 587.3 1372.6 581.3 1379.8 577.5 C1387.0 573.7 1399.4 567.6 1403.3 565.6"/>
<path d="M1403.3 565.6 C1407.0 568.3 1419.2 577.9 1425.4 581.9 C1431.6 585.9 1430.3 587.9 1440.6 589.5 C1450.9 591.1 1479.3 591.2 1487.0 591.6"/>
<path d="M1440.6 589.5 C1439.9 592.9 1435.1 603.1 1436.2 610.1 C1437.3 617.1 1445.6 624.9 1447.1 631.8 C1448.5 638.7 1447.1 644.9 1444.9 651.3 C1442.7 657.7 1436.3 665.0 1434.1 670.4 C1431.9 675.8 1431.2 679.8 1431.9 683.8 C1432.6 687.8 1437.3 692.9 1438.4 694.7"/>
<path d="M1161.8 666.5 C1165.6 665.8 1178.3 662.5 1184.6 662.1 C1190.9 661.7 1190.8 663.6 1199.8 664.3 C1208.8 665.0 1229.8 664.0 1238.8 666.5 C1247.8 669.0 1248.2 675.5 1254.0 679.5 C1259.8 683.5 1265.3 686.7 1273.6 690.3 C1281.9 693.9 1294.2 698.3 1303.9 701.2 C1313.7 704.1 1324.1 706.4 1332.1 707.7 C1340.1 709.0 1348.8 709.0 1352.1 709.2"/>
<path d="M1126.0 545.0 C1126.7 547.2 1127.9 553.3 1130.4 558.0 C1132.9 562.7 1138.7 564.5 1141.2 573.2 C1143.7 581.9 1144.5 599.6 1145.6 610.1 C1146.7 620.6 1148.4 628.2 1147.7 636.1 C1147.0 644.0 1141.6 650.8 1141.2 657.8 C1140.8 664.8 1144.9 675.0 1145.6 678.4"/>
<path d="M1156.4 677.3 C1158.6 678.4 1165.4 680.9 1169.4 683.8 C1173.4 686.7 1177.0 690.0 1180.3 694.7 C1183.6 699.4 1186.5 707.8 1189.0 712.0 C1191.5 716.2 1194.4 718.8 1195.5 720.1"/>
<path d="M1087.0 696.8 C1090.6 697.5 1102.2 698.3 1108.7 701.2 C1115.2 704.1 1123.1 712.0 1126.0 714.2"/>
<path d="M1408.0 545.0 L1403.3 565.6"/>
<path d="M1468.8 545.0 C1469.5 548.6 1474.5 560.2 1473.1 566.7 C1471.6 573.2 1465.5 580.2 1460.1 584.0 C1454.7 587.8 1443.8 588.6 1440.6 589.5"/>
<path d="M1444.0 589.5 C1449.4 590.0 1465.7 592.4 1476.5 592.7 C1487.3 593.1 1500.0 590.2 1509.1 591.6 C1518.1 593.0 1522.1 597.6 1530.8 601.4 C1539.5 605.2 1552.1 613.3 1561.1 614.4 C1570.1 615.5 1578.1 609.3 1585.0 607.9 C1591.9 606.5 1598.8 608.2 1602.4 605.7 C1606.0 603.2 1607.1 596.7 1606.7 592.7 C1606.3 588.7 1602.7 585.1 1600.2 581.9 C1597.7 578.6 1592.2 577.2 1591.5 573.2 C1590.8 569.2 1595.8 562.7 1595.8 558.0 C1595.8 553.3 1592.2 547.2 1591.5 545.0"/>
<path d="M1602.4 605.7 C1601.3 608.6 1594.0 619.8 1595.8 623.1 C1597.6 626.4 1608.5 623.8 1613.2 625.3 C1617.9 626.8 1620.4 631.1 1624.0 631.8 C1627.6 632.5 1631.6 626.7 1634.9 629.6 C1638.2 632.5 1640.7 643.7 1643.6 649.1 C1646.5 654.5 1646.1 657.6 1652.2 662.1 C1658.3 666.6 1675.4 673.9 1680.0 676.2"/>
<path d="M1626.2 618.8 C1627.7 619.3 1629.1 621.5 1634.9 622.0 C1640.7 622.5 1653.0 620.9 1660.9 622.0 C1668.9 623.1 1679.3 623.2 1682.6 628.5 C1685.8 633.8 1680.8 645.5 1680.4 653.5 C1680.0 661.5 1680.1 672.4 1680.0 676.2"/>
<path d="M1682.6 628.5 C1684.8 626.1 1688.7 619.1 1695.6 614.4 C1702.5 609.7 1715.1 604.6 1723.8 600.3 C1732.5 596.0 1740.1 591.3 1747.7 588.4 C1755.3 585.5 1764.0 586.6 1769.4 583.0 C1774.8 579.4 1778.0 573.0 1780.2 566.7 C1782.4 560.4 1782.0 548.6 1782.4 545.0"/>
<path d="M1769.4 583.0 C1771.6 584.6 1777.4 591.4 1782.4 592.7 C1787.5 594.0 1794.6 589.5 1799.7 590.6 C1804.8 591.7 1808.6 596.7 1812.8 599.2 C1817.0 601.7 1822.7 604.6 1824.7 605.7"/>
<path d="M1472.2 545.0 C1471.8 547.9 1472.5 556.6 1470.0 562.4 C1467.5 568.2 1461.3 575.2 1457.0 579.7 C1452.7 584.2 1446.2 587.9 1444.0 589.5"/>
<path d="M1680.0 676.2 C1678.6 679.6 1672.8 691.2 1671.8 696.8 C1670.8 702.4 1672.1 706.0 1673.9 709.9 C1675.7 713.8 1681.1 718.4 1682.6 720.1"/>
<path d="M1650.1 679.5 C1651.2 682.4 1653.0 691.7 1656.6 696.8 C1660.2 701.9 1669.3 707.7 1671.8 709.9"/>
<path d="M1680.0 676.2 C1681.5 678.9 1686.1 687.6 1689.1 692.5 C1692.1 697.4 1693.5 701.9 1697.8 705.5 C1702.1 709.1 1706.8 712.4 1715.1 714.2 C1723.4 716.0 1742.3 716.0 1747.7 716.4"/>
<path d="M1561.1 697.9 C1563.3 699.2 1571.7 701.8 1574.2 705.5 C1576.7 709.2 1576.0 717.7 1576.3 720.1"/>
<path d="M400.9 732.3 C402.9 731.0 407.9 727.4 412.8 724.7 C417.7 722.0 427.3 717.5 430.2 716.0"/>
<path d="M513.2 793.4 C512.0 795.0 508.4 799.8 506.1 802.8 C503.8 805.8 503.6 808.9 499.6 811.4 C495.6 813.9 487.6 815.5 482.2 818.0 C476.8 820.5 472.1 822.6 467.0 826.6 C461.9 830.6 456.6 838.2 451.9 841.8 C447.2 845.4 441.7 846.8 438.8 848.3 C435.9 849.8 435.2 850.1 434.5 850.5"/>
<path d="M287.0 744.2 C291.3 743.1 305.8 740.6 313.0 737.7 C320.2 734.8 325.3 729.7 330.4 726.8 C335.5 723.9 336.9 721.0 343.4 720.3 C349.9 719.6 361.8 722.6 369.4 722.5 C377.0 722.4 385.7 720.3 389.0 719.9"/>
<path d="M292.4 811.4 C293.1 814.3 296.6 821.6 296.8 828.8 C297.0 836.0 294.4 844.4 293.5 854.8 C292.6 865.2 291.7 885.0 291.3 891.1"/>
<path d="M660.1 719.9 C661.2 722.5 664.4 730.4 666.6 735.5 C668.8 740.6 673.5 744.9 673.1 750.7 C672.7 756.5 669.1 764.1 664.4 770.2 C659.7 776.4 651.8 782.5 644.9 787.6 C638.0 792.7 628.3 795.5 623.2 800.6 C618.1 805.7 616.0 811.9 614.5 818.0 C613.0 824.1 612.7 830.6 614.5 837.5 C616.3 844.4 625.0 852.7 625.4 859.2 C625.8 865.7 619.2 871.2 616.7 876.5 C614.2 881.8 611.3 888.7 610.2 891.1"/>
<path d="M610.2 887.4 C614.2 886.3 624.7 883.1 634.1 880.9 C643.5 878.7 657.8 875.8 666.6 874.4 C675.4 873.0 683.6 872.6 687.0 872.2"/>
<path d="M992.9 732.9 C992.5 734.8 993.6 739.1 990.7 744.2 C987.8 749.3 979.1 758.3 975.5 763.7 C971.9 769.1 967.9 772.4 969.0 776.7 C970.1 781.1 979.1 785.3 982.0 789.8 C984.9 794.3 985.2 798.1 986.3 803.9 C987.4 809.7 986.3 817.5 988.5 824.5 C990.7 831.5 995.4 840.4 999.4 846.2 C1003.4 852.0 1006.6 855.6 1012.4 859.2 C1018.2 862.8 1026.9 864.2 1034.1 867.8 C1041.3 871.4 1047.0 877.6 1055.8 880.9 C1064.6 884.2 1081.8 886.3 1087.0 887.4"/>
<path d="M687.0 867.8 C688.8 868.7 695.3 869.4 697.8 873.3 C700.3 877.2 701.5 888.1 702.2 891.1"/>
<path d="M1182.4 759.4 C1188.9 757.6 1208.5 752.3 1221.5 748.5 C1234.5 744.7 1248.6 740.2 1260.5 736.6 C1272.4 733.0 1282.2 729.9 1293.1 726.8 C1303.9 723.7 1317.6 720.4 1325.6 718.2 C1333.5 716.0 1336.4 714.9 1340.8 713.4 C1345.2 711.9 1350.2 710.0 1352.1 709.3"/>
<path d="M1132.6 716.0 C1135.8 717.5 1146.0 720.7 1152.1 724.7 C1158.2 728.7 1164.7 736.6 1169.4 739.9 C1174.1 743.1 1178.1 741.9 1180.3 744.2 C1182.5 746.6 1183.5 749.7 1182.4 754.0 C1181.3 758.3 1176.7 764.6 1173.8 770.2 C1170.9 775.8 1165.8 781.5 1165.1 787.6 C1164.4 793.8 1169.8 801.0 1169.4 807.1 C1169.0 813.2 1163.2 818.7 1162.9 824.5 C1162.6 830.3 1165.5 837.5 1167.3 841.8 C1169.1 846.1 1169.8 848.3 1173.8 850.5 C1177.8 852.7 1186.4 851.9 1191.1 854.8 C1195.8 857.7 1199.8 863.4 1202.0 867.8 C1204.2 872.1 1201.6 877.0 1204.1 880.9 C1206.6 884.8 1215.0 889.4 1217.2 891.1"/>
<path d="M1330.4 869.4 C1335.0 868.8 1348.0 866.0 1358.1 865.7 C1368.1 865.4 1379.8 865.3 1390.7 867.8 C1401.6 870.3 1416.0 877.0 1423.2 880.9 C1430.4 884.8 1432.3 889.4 1434.1 891.1"/>
<path d="M1487.0 824.5 C1483.6 826.7 1471.1 830.3 1466.6 837.5 C1462.1 844.7 1462.3 858.9 1460.1 867.8 C1457.9 876.7 1454.7 887.2 1453.6 891.1"/>
<path d="M1501.5 797.3 C1501.0 793.9 1498.0 783.0 1498.2 776.7 C1498.4 770.4 1500.8 764.8 1502.6 759.4 C1504.4 754.0 1504.4 749.3 1509.1 744.2 C1513.8 739.1 1526.5 733.7 1530.8 729.0 C1535.1 724.3 1534.4 718.2 1535.1 716.0"/>
<path d="M1515.6 798.4 C1518.1 794.4 1524.6 780.4 1530.8 774.6 C1537.0 768.8 1545.3 767.7 1552.5 763.7 C1559.7 759.7 1567.3 755.4 1574.2 750.7 C1581.1 746.0 1586.5 739.1 1593.7 735.5 C1600.9 731.9 1611.7 732.2 1617.5 729.0 C1623.3 725.8 1626.6 718.2 1628.4 716.0"/>
<path d="M1501.5 797.3 C1499.2 799.6 1490.8 806.9 1487.4 811.4 C1484.0 815.9 1484.5 820.1 1480.9 824.5 C1477.3 828.9 1469.0 832.1 1465.7 837.5 C1462.5 842.9 1462.9 848.1 1461.4 857.0 C1460.0 865.9 1457.7 885.4 1457.0 891.1"/>
<path d="M1515.6 798.4 C1516.0 800.9 1518.5 808.5 1517.8 813.6 C1517.1 818.7 1511.9 823.4 1511.2 828.8 C1510.5 834.2 1511.2 841.5 1513.4 846.2 C1515.6 850.9 1518.9 854.5 1524.3 857.0 C1529.7 859.5 1539.9 858.8 1546.0 861.3 C1552.1 863.8 1558.2 867.2 1561.1 872.2 C1564.0 877.2 1562.9 888.0 1563.3 891.1"/>
<path d="M1517.8 813.6 C1520.0 814.7 1525.8 817.6 1530.8 820.1 C1535.8 822.6 1540.9 828.1 1548.1 828.8 C1555.3 829.5 1565.5 824.5 1574.2 824.5 C1582.9 824.5 1595.9 825.2 1600.2 828.8 C1604.5 832.4 1598.8 842.6 1600.2 846.2 C1601.7 849.8 1604.2 851.6 1608.9 850.5 C1613.6 849.4 1621.5 842.5 1628.4 839.6 C1635.3 836.7 1644.4 834.9 1650.1 833.1 C1655.8 831.3 1660.4 829.5 1662.4 828.8"/>
<path d="M1662.4 828.8 C1660.7 831.7 1655.7 840.1 1652.2 846.2 C1648.7 852.4 1641.4 859.9 1641.4 865.7 C1641.4 871.5 1649.3 876.7 1652.2 880.9 C1655.1 885.1 1657.7 889.4 1658.8 891.1"/>
<path d="M1713.0 716.0 C1715.2 717.5 1720.2 722.4 1726.0 724.7 C1731.8 727.1 1739.8 729.8 1747.7 730.1 C1755.7 730.4 1764.7 727.7 1773.7 726.4 C1782.7 725.1 1793.4 723.0 1801.9 722.5 C1810.4 722.0 1820.9 723.4 1824.7 723.6"/>
<path d="M1736.8 726.8 C1737.9 729.3 1741.1 736.2 1743.3 742.0 C1745.5 747.8 1745.9 758.9 1749.9 761.6 C1753.9 764.3 1761.8 756.5 1767.2 758.3 C1772.6 760.1 1777.7 767.1 1782.4 772.4 C1787.1 777.6 1790.5 784.4 1795.4 789.8 C1800.4 795.2 1812.1 800.4 1812.1 804.9 C1812.1 809.4 1800.4 811.5 1795.4 816.9 C1790.5 822.3 1786.7 830.8 1782.4 837.5 C1778.1 844.2 1775.2 851.2 1769.4 857.0 C1763.6 862.8 1755.3 867.7 1747.7 872.2 C1740.1 876.7 1727.8 882.1 1723.8 884.1"/>
<path d="M1444.0 772.4 C1446.2 772.8 1452.7 773.1 1457.0 774.6 C1461.3 776.1 1465.7 778.6 1470.0 781.1 C1474.3 783.6 1480.8 788.3 1483.0 789.8"/>
<path d="M1098.2 744.9 C1097.0 741.0 1093.1 729.0 1091.0 721.5 C1088.9 714.0 1086.6 703.6 1085.7 700.0"/>
<path d="M1118.9 771.8 C1122.0 772.4 1129.8 773.0 1137.7 775.4 C1145.6 777.8 1161.6 784.4 1166.4 786.2"/>
<path d="M1105.4 797.8 C1106.6 800.9 1110.8 810.3 1112.6 816.7 C1114.4 823.1 1114.4 830.1 1116.2 836.4 C1118.0 842.7 1122.2 851.4 1123.4 854.4"/>
<path d="M1040.8 735.9 C1042.6 733.2 1047.3 723.9 1051.5 719.7 C1055.7 715.5 1058.1 712.9 1065.9 710.8 C1073.7 708.7 1087.7 706.9 1098.2 707.2 C1108.7 707.5 1119.1 710.5 1128.7 712.6 C1138.3 714.7 1147.0 714.6 1155.7 719.7 C1164.4 724.8 1176.3 736.5 1180.8 743.1 C1185.3 749.7 1185.0 752.0 1182.6 759.2 C1180.2 766.4 1169.7 775.1 1166.4 786.2 C1163.1 797.3 1168.9 817.3 1162.9 825.7 C1156.9 834.1 1141.3 834.3 1130.5 836.4 C1119.7 838.5 1109.6 840.3 1098.2 838.2 C1086.8 836.1 1071.9 829.0 1062.3 823.9 C1052.7 818.8 1045.6 815.8 1040.8 807.7 C1036.0 799.6 1033.6 787.4 1033.6 775.4 C1033.6 763.4 1039.6 742.5 1040.8 735.9"/>
</g>
<g fill="none" stroke="#c8b39d" stroke-width="1.35" stroke-linejoin="round" stroke-linecap="round">
<path d="M287.0 669.7 C292.4 671.3 309.0 678.4 319.5 679.5 C330.0 680.6 338.3 677.5 349.9 676.2 C361.5 674.9 377.1 671.4 389.0 671.9 C400.9 672.4 413.2 677.3 421.5 679.5 C429.8 681.7 433.7 684.5 438.8 684.9 C443.9 685.3 444.7 682.3 451.9 682.1 C459.1 681.9 473.5 684.2 482.2 683.8 C490.9 683.4 496.7 681.0 503.9 679.5 C511.1 678.0 518.4 675.0 525.6 674.5 C532.8 674.0 540.1 676.3 547.3 676.7 C554.5 677.1 561.8 676.4 569.0 676.7 C576.2 677.0 581.7 677.9 590.7 678.4 C599.7 678.9 612.4 679.5 623.2 679.9 C634.1 680.3 645.2 680.0 655.8 680.6 C666.4 681.2 681.8 683.3 687.0 683.8"/>
<path d="M287.0 618.8 C290.6 622.4 301.5 633.5 308.7 640.4 C315.9 647.3 323.5 653.9 330.4 660.0 C337.3 666.1 344.5 671.5 349.9 677.3 C355.3 683.1 358.2 689.3 362.9 694.7 C367.6 700.1 373.8 705.7 378.1 709.9 C382.5 714.1 386.1 717.6 389.0 720.1 C391.9 722.6 394.4 724.2 395.5 725.0"/>
<path d="M687.0 685.6 C691.3 686.0 705.4 687.2 713.0 688.2 C720.6 689.2 725.4 690.3 732.6 691.4 C739.8 692.5 748.1 694.2 756.4 694.7 C764.7 695.2 775.2 695.1 782.4 694.7 C789.6 694.3 794.0 691.8 799.8 692.5 C805.6 693.2 813.6 697.4 817.2 699.0 C820.8 700.6 814.3 701.0 821.5 702.3 C828.7 703.6 850.4 704.2 860.5 706.6 C870.6 709.0 876.8 714.1 882.2 716.4 C887.6 718.6 891.3 719.5 893.1 720.1"/>
<path d="M799.8 687.1 C802.0 685.5 807.7 680.4 812.8 677.3 C817.9 674.2 823.3 673.6 830.2 668.6 C837.1 663.6 845.3 653.3 854.0 647.0 C862.7 640.7 873.9 635.4 882.2 630.7 C890.5 626.0 898.1 623.0 903.9 618.8 C909.7 614.6 912.2 609.9 916.9 605.7 C921.6 601.5 927.8 596.5 932.1 593.8 C936.5 591.1 941.2 590.2 943.0 589.5"/>
<path d="M856.2 558.0 C857.7 558.7 857.0 559.9 864.9 562.4 C872.8 564.9 893.8 570.0 903.9 573.2 C914.0 576.5 920.5 578.6 925.6 581.9 C930.7 585.1 930.7 589.8 934.3 592.7 C937.9 595.6 941.9 597.4 947.3 599.2 C952.7 601.0 960.3 600.7 966.8 603.6 C973.3 606.5 981.6 611.9 986.3 616.6 C991.0 621.3 991.7 625.3 995.0 631.8 C998.3 638.3 1002.3 648.4 1005.9 655.6 C1009.5 662.8 1012.0 668.7 1016.7 675.2 C1021.4 681.7 1028.3 688.9 1034.1 694.7 C1039.9 700.5 1047.1 705.7 1051.4 709.9 C1055.7 714.1 1058.6 718.4 1060.1 720.1"/>
<path d="M830.2 668.6 C830.6 671.1 833.8 678.4 832.3 683.8 C830.8 689.2 823.7 695.2 821.5 701.2 C819.3 707.2 819.7 717.0 819.3 720.1"/>
<path d="M1251.9 545.0 C1251.2 547.9 1251.1 555.5 1247.5 562.4 C1243.9 569.3 1235.2 581.2 1230.2 586.2 C1225.2 591.2 1219.9 590.5 1217.2 592.7 C1214.5 594.9 1213.7 596.7 1213.9 599.2 C1214.1 601.7 1219.8 605.2 1218.2 607.9 C1216.6 610.6 1209.0 611.2 1204.1 615.5 C1199.2 619.8 1192.6 629.0 1189.0 633.9 C1185.4 638.8 1186.0 641.5 1182.4 644.8 C1178.8 648.1 1170.7 649.9 1167.3 653.5 C1163.9 657.1 1163.6 662.5 1161.8 666.5 C1160.0 670.5 1160.2 672.2 1156.4 677.3 C1152.6 682.3 1144.2 690.6 1139.1 696.8 C1134.0 702.9 1128.9 710.3 1126.0 714.2 C1123.1 718.1 1122.4 719.1 1121.7 720.1"/>
<path d="M1403.3 565.6 C1402.8 569.4 1403.2 582.1 1400.4 588.4 C1397.6 594.7 1391.2 598.5 1386.3 603.6 C1381.4 608.7 1374.5 614.1 1371.2 618.8 C1368.0 623.5 1367.9 627.5 1366.8 631.8 C1365.7 636.1 1366.3 640.5 1364.7 644.8 C1363.1 649.1 1358.5 652.0 1357.1 657.8 C1355.6 663.6 1356.0 673.0 1356.0 679.5 C1356.0 686.0 1357.8 691.8 1357.1 696.8 C1356.4 701.8 1352.9 707.1 1352.1 709.2"/>
<path d="M1352.1 709.2 C1356.4 707.9 1369.7 703.1 1377.7 701.2 C1385.8 699.3 1391.0 699.0 1400.4 697.9 C1409.8 696.8 1424.9 695.4 1434.1 694.7 C1443.3 694.0 1447.0 694.2 1455.8 693.6 C1464.6 693.0 1481.8 691.8 1487.0 691.4"/>
<path d="M1444.0 693.6 C1449.4 693.2 1465.3 692.0 1476.5 691.4 C1487.7 690.8 1502.2 689.0 1511.2 689.9 C1520.2 690.8 1525.0 694.5 1530.8 696.8 C1536.6 699.0 1541.0 703.2 1546.0 703.4 C1551.0 703.6 1554.6 700.8 1561.1 697.9 C1567.6 695.0 1575.6 688.7 1585.0 686.0 C1594.4 683.3 1606.7 682.8 1617.5 681.7 C1628.3 680.6 1639.7 680.4 1650.1 679.5 C1660.5 678.6 1675.0 676.8 1680.0 676.2"/>
<path d="M400.9 732.3 C403.6 733.2 410.9 734.3 417.2 737.7 C423.5 741.1 432.3 748.6 438.8 752.9 C445.3 757.2 451.1 760.6 456.2 763.7 C461.3 766.8 465.6 770.6 469.2 771.3 C472.8 772.0 474.6 767.5 477.9 768.1 C481.1 768.7 485.8 771.4 488.7 774.6 C491.6 777.9 492.7 784.7 495.2 787.6 C497.7 790.5 500.9 790.9 503.9 791.9 C506.9 792.9 511.7 793.1 513.2 793.4"/>
<path d="M397.6 726.4 C397.2 728.6 394.9 737.1 395.5 739.9 C396.1 742.7 399.1 739.9 400.9 743.1 C402.7 746.4 405.8 753.1 406.3 759.4 C406.8 765.7 404.6 773.9 404.1 781.1 C403.6 788.3 402.0 796.6 403.1 802.8 C404.2 808.9 407.5 813.0 410.6 818.0 C413.7 823.0 417.9 829.1 421.5 833.1 C425.1 837.1 430.1 838.9 432.3 841.8 C434.5 844.7 433.8 846.5 434.5 850.5 C435.2 854.5 437.1 861.7 436.7 865.7 C436.3 869.7 433.0 873.0 432.3 874.4"/>
<path d="M389.0 719.9 C390.4 721.0 395.6 724.3 397.6 726.4 C399.6 728.5 400.3 729.5 400.9 732.3 C401.4 735.1 400.9 741.3 400.9 743.1"/>
<path d="M513.2 793.4 C515.3 795.7 522.5 801.2 525.6 807.1 C528.8 813.0 529.6 821.6 532.1 828.8 C534.6 836.0 538.3 842.5 540.8 850.5 C543.3 858.5 544.8 869.7 547.3 876.5 C549.8 883.3 554.5 888.7 556.0 891.1"/>
<path d="M292.4 811.4 C295.5 811.0 304.6 807.1 310.9 809.3 C317.2 811.5 324.3 819.6 330.4 824.5 C336.5 829.4 340.8 835.7 347.7 838.6 C354.6 841.5 364.4 839.6 371.6 841.8 C378.8 844.0 384.6 849.4 391.1 851.6 C397.6 853.8 405.4 853.2 410.6 854.8 C415.9 856.3 420.6 859.9 422.6 860.9"/>
<path d="M410.6 854.8 C410.6 856.6 409.9 862.8 410.6 865.7 C411.3 868.6 411.4 870.8 415.0 872.2 C418.6 873.7 428.7 875.5 432.3 874.4 C435.9 873.3 436.3 869.7 436.7 865.7 C437.1 861.7 434.9 853.0 434.5 850.5"/>
<path d="M410.6 865.7 C404.5 866.8 382.5 869.3 373.8 872.2 C365.1 875.1 365.8 880.5 358.6 883.0 C351.4 885.5 338.7 886.0 330.4 887.4 C322.1 888.8 312.3 890.5 308.7 891.1"/>
<path d="M432.3 874.4 L434.5 891.1"/>
<path d="M819.3 716.0 C818.2 718.9 816.0 727.6 812.8 733.4 C809.5 739.2 803.0 744.9 799.8 750.7 C796.5 756.5 795.1 762.3 793.3 768.1 C791.5 773.9 789.4 778.9 789.0 785.4 C788.6 791.9 790.2 799.9 791.1 807.1 C792.0 814.3 793.7 822.3 794.4 828.8 C795.1 835.3 794.6 841.5 795.5 846.2 C796.4 850.9 799.4 853.4 799.8 857.0 C800.1 860.6 796.9 863.8 797.6 867.8 C798.3 871.8 802.5 877.0 804.1 880.9 C805.7 884.8 806.9 889.4 807.4 891.1"/>
<path d="M687.0 867.8 C689.2 867.4 692.8 866.8 700.0 865.7 C707.2 864.6 721.0 862.4 730.4 861.3 C739.8 860.2 748.4 859.6 756.4 859.2 C764.4 858.9 771.6 859.9 778.1 859.2 C784.6 858.5 790.4 857.3 795.5 854.8 C800.6 852.3 803.1 848.0 808.5 844.0 C813.9 840.0 820.8 836.1 828.0 831.0 C835.2 825.9 844.7 817.1 851.9 813.6 C859.1 810.1 864.5 810.1 871.4 809.7 C878.3 809.3 884.8 810.3 893.1 811.4 C901.4 812.5 910.8 815.4 921.3 816.2 C931.8 817.0 945.2 818.2 956.0 816.2 C966.8 814.2 976.9 806.7 986.3 803.9 C995.7 801.1 1003.0 801.3 1012.4 799.5 C1021.8 797.7 1033.7 794.6 1042.7 793.0 C1051.7 791.4 1059.2 791.1 1066.6 789.8 C1074.0 788.5 1083.6 786.1 1087.0 785.4"/>
<path d="M882.2 716.0 C885.8 717.1 893.0 720.9 903.9 722.5 C914.8 724.1 936.4 724.5 947.3 725.8 C958.1 727.1 961.4 728.9 969.0 730.1 C976.6 731.3 985.7 730.5 992.9 732.9 C1000.1 735.2 1005.5 739.8 1012.4 744.2 C1019.3 748.6 1026.9 756.0 1034.1 759.4 C1041.3 762.8 1049.3 764.3 1055.8 764.8 C1062.3 765.3 1067.9 763.1 1073.1 762.6 C1078.3 762.1 1084.7 761.8 1087.0 761.6"/>
<path d="M1087.0 794.1 C1082.5 795.5 1067.8 800.6 1060.1 802.8 C1052.4 805.0 1046.4 803.5 1040.6 807.1 C1034.8 810.7 1029.4 820.8 1025.4 824.5 C1021.4 828.2 1018.9 825.6 1016.7 829.2 C1014.5 832.8 1013.1 841.2 1012.4 846.2 C1011.7 851.2 1013.1 854.9 1012.4 859.2 C1011.7 863.5 1010.2 866.9 1008.0 872.2 C1005.8 877.5 1000.8 888.0 999.4 891.1"/>
<path d="M1119.5 762.6 C1124.9 761.7 1141.6 758.6 1152.1 757.2 C1162.6 755.8 1170.8 755.8 1182.4 754.0 C1194.0 752.2 1209.2 748.9 1221.5 746.4 C1233.8 743.9 1246.1 741.1 1256.2 738.8 C1266.3 736.4 1272.4 735.0 1282.2 732.3 C1292.0 729.6 1306.5 725.2 1314.8 722.5 C1323.1 719.8 1327.4 717.7 1332.1 716.0 C1336.8 714.3 1339.7 713.2 1343.0 712.1 C1346.3 711.0 1350.6 709.8 1352.1 709.3"/>
<path d="M1352.1 709.3 C1352.2 710.4 1350.6 712.7 1352.7 716.0 C1354.8 719.3 1361.6 723.9 1364.7 729.0 C1367.8 734.1 1369.0 740.2 1371.2 746.4 C1373.4 752.5 1376.3 758.3 1377.7 765.9 C1379.1 773.5 1381.2 785.8 1379.8 791.9 C1378.3 798.0 1371.2 798.8 1369.0 802.8 C1366.8 806.8 1365.7 811.5 1366.8 815.8 C1367.9 820.1 1373.9 823.0 1375.5 828.8 C1377.1 834.6 1378.0 845.1 1376.6 850.5 C1375.1 855.9 1371.7 858.4 1366.8 861.3 C1361.9 864.2 1353.4 866.4 1347.3 867.8 C1341.2 869.1 1335.5 867.6 1330.4 869.4 C1325.3 871.2 1320.2 875.1 1316.9 878.7 C1313.6 882.3 1311.5 889.0 1310.4 891.1"/>
<path d="M1352.1 709.3 C1352.8 710.4 1353.2 712.7 1356.0 716.0 C1358.8 719.3 1363.2 722.5 1369.0 729.0 C1374.8 735.5 1381.7 748.9 1390.7 755.0 C1399.7 761.1 1412.4 761.5 1423.2 765.9 C1434.0 770.2 1445.2 777.1 1455.8 781.1 C1466.4 785.1 1481.8 788.3 1487.0 789.8"/>
<path d="M1444.0 782.2 C1446.9 782.7 1454.9 784.1 1461.4 785.4 C1467.9 786.7 1476.3 787.8 1483.0 789.8 C1489.7 791.8 1498.4 796.0 1501.5 797.3"/>
<path d="M1501.5 797.3 C1503.8 797.5 1508.9 798.0 1515.6 798.4 C1522.3 798.8 1531.8 799.0 1541.6 799.5 C1551.4 800.0 1563.3 800.6 1574.2 801.7 C1585.1 802.8 1595.9 804.7 1606.7 806.0 C1617.5 807.3 1628.7 808.6 1639.2 809.3 C1649.7 810.0 1661.3 809.3 1669.6 810.4 C1677.9 811.5 1682.2 814.5 1689.1 815.8 C1696.0 817.1 1702.8 818.5 1710.8 818.0 C1718.8 817.5 1727.0 813.0 1736.8 812.5 C1746.6 812.0 1759.6 814.0 1769.4 814.7 C1779.2 815.4 1786.2 817.1 1795.4 816.9 C1804.6 816.7 1819.8 814.1 1824.7 813.6"/>
<path d="M1671.8 716.0 C1672.5 718.2 1674.8 721.8 1676.1 729.0 C1677.4 736.2 1679.0 748.9 1679.4 759.4 C1679.8 769.9 1679.9 783.4 1678.3 791.9 C1676.7 800.4 1671.2 803.5 1669.6 810.4 C1668.0 817.3 1667.0 827.1 1668.5 833.1 C1670.0 839.1 1674.1 841.5 1678.3 846.2 C1682.5 850.9 1688.1 856.6 1693.5 861.3 C1698.9 866.0 1705.8 870.6 1710.8 874.4 C1715.8 878.2 1720.2 881.3 1723.8 884.1 C1727.4 886.9 1731.0 889.9 1732.5 891.1"/>
<path d="M1082.1 752.1 C1079.4 748.5 1071.0 736.8 1065.9 730.5 C1060.8 724.2 1055.7 719.5 1051.5 714.4 C1047.3 709.3 1042.6 702.4 1040.8 700.0"/>
<path d="M1109.0 748.5 C1111.4 744.9 1119.8 733.2 1123.4 726.9 C1127.0 720.6 1129.0 715.3 1130.5 710.8 C1132.0 706.3 1132.0 701.8 1132.3 700.0"/>
<path d="M1118.9 764.6 C1123.5 763.7 1137.6 760.7 1146.7 759.2 C1155.8 757.7 1166.4 756.6 1173.6 755.7 C1180.8 754.8 1187.3 754.2 1190.0 753.9"/>
<path d="M1114.4 786.2 C1117.1 788.6 1124.8 795.7 1130.5 800.5 C1136.2 805.3 1143.1 810.1 1148.5 814.9 C1153.9 819.7 1158.7 824.5 1162.9 829.3 C1167.1 834.1 1169.1 840.0 1173.6 843.6 C1178.1 847.2 1187.3 849.6 1190.0 850.8"/>
<path d="M1098.2 797.8 C1097.9 800.9 1097.5 809.1 1096.4 816.7 C1095.4 824.3 1093.1 836.4 1091.9 843.6 C1090.7 850.8 1089.7 857.3 1089.2 860.0"/>
<path d="M1083.9 789.8 C1079.4 791.6 1064.1 797.5 1056.9 800.5 C1049.7 803.5 1045.3 804.1 1040.8 807.7 C1036.3 811.3 1031.8 819.7 1030.0 822.1"/>
<path d="M1075.8 780.8 C1071.2 782.3 1055.6 787.1 1048.0 789.8 C1040.4 792.5 1033.0 795.7 1030.0 796.9"/>
<path d="M1075.8 764.6 C1072.0 764.3 1059.1 763.7 1053.3 762.8 C1047.5 761.9 1044.7 760.1 1040.8 759.2 C1036.9 758.3 1031.8 757.8 1030.0 757.5"/>
</g>
<ellipse cx="1097.3" cy="771.4" rx="21.5" ry="26.5" fill="none" stroke="#cbb8a4" stroke-width="1.2"/>
<ellipse cx="1098" cy="769" rx="8.5" ry="8.5" fill="none" stroke="#d6cdc0" stroke-width="0.9"/>
<rect x="548" y="671.2" width="20" height="11.5" rx="2.2" fill="#7e8ba4" stroke="#e8ebe8" stroke-width="0.8"/>
<text x="558.0" y="680.1" font-size="9.5" font-weight="700" fill="#fff" text-anchor="middle" textLength="14.5" lengthAdjust="spacingAndGlyphs">М-9</text>
<rect x="733" y="685.6" width="20.2" height="11.2" rx="2.2" fill="#66786f" stroke="#e8ebe8" stroke-width="0.8"/>
<text x="743.1" y="694.2" font-size="9.5" font-weight="700" fill="#fff" text-anchor="middle" textLength="14.7" lengthAdjust="spacingAndGlyphs">E22</text>
<rect x="880.7" y="617" width="30.3" height="12" rx="2.2" fill="#7e8ba4" stroke="#e8ebe8" stroke-width="0.8"/>
<text x="895.9" y="626.4" font-size="9.5" font-weight="700" fill="#fff" text-anchor="middle" textLength="24.8" lengthAdjust="spacingAndGlyphs">Р-132</text>
<rect x="963" y="604" width="25" height="12" rx="2.2" fill="#66786f" stroke="#e8ebe8" stroke-width="0.8"/>
<text x="975.5" y="613.4" font-size="9.5" font-weight="700" fill="#fff" text-anchor="middle" textLength="19.5" lengthAdjust="spacingAndGlyphs">E105</text>
<rect x="1240" y="551.5" width="20.5" height="11.5" rx="2.2" fill="#7e8ba4" stroke="#e8ebe8" stroke-width="0.8"/>
<text x="1250.2" y="560.4" font-size="9.5" font-weight="700" fill="#fff" text-anchor="middle" textLength="15.0" lengthAdjust="spacingAndGlyphs">М-8</text>
<rect x="1350.6" y="624.2" width="30.8" height="11.5" rx="2.2" fill="#7e8ba4" stroke="#e8ebe8" stroke-width="0.8"/>
<text x="1366.0" y="633.1" font-size="9.5" font-weight="700" fill="#fff" text-anchor="middle" textLength="25.3" lengthAdjust="spacingAndGlyphs">Р-132</text>
<rect x="1449" y="687.2" width="20.2" height="11.8" rx="2.2" fill="#66786f" stroke="#e8ebe8" stroke-width="0.8"/>
<text x="1459.1" y="696.4" font-size="9.5" font-weight="700" fill="#fff" text-anchor="middle" textLength="14.7" lengthAdjust="spacingAndGlyphs">E22</text>
<rect x="776" y="767" width="30.3" height="12.3" rx="2.2" fill="#7e8ba4" stroke="#e8ebe8" stroke-width="0.8"/>
<text x="791.1" y="776.7" font-size="9.5" font-weight="700" fill="#fff" text-anchor="middle" textLength="24.8" lengthAdjust="spacingAndGlyphs">Р-132</text>
<rect x="1080" y="849.4" width="19.8" height="11.8" rx="2.2" fill="#7e8ba4" stroke="#e8ebe8" stroke-width="0.8"/>
<text x="1089.9" y="858.6" font-size="9.5" font-weight="700" fill="#fff" text-anchor="middle" textLength="14.3" lengthAdjust="spacingAndGlyphs">М-2</text>
<g fill="#fff" stroke="#555" stroke-width="1">
<circle cx="554.5" cy="648.7" r="2"/>
<circle cx="451.4" cy="673.6" r="2"/>
<circle cx="656.4" cy="692.5" r="2"/>
<circle cx="783.5" cy="560.2" r="2"/>
<circle cx="856.4" cy="558.4" r="2"/>
<circle cx="943" cy="589" r="2"/>
<circle cx="1056.4" cy="608.6" r="2"/>
<circle cx="1017.4" cy="675.6" r="2"/>
<circle cx="1088.9" cy="673.2" r="2"/>
<circle cx="799.4" cy="686.6" r="2"/>
<circle cx="946.7" cy="723.6" r="2"/>
<circle cx="1403" cy="565.2" r="2"/>
<circle cx="1440.6" cy="589.5" r="2"/>
<circle cx="1434.5" cy="670.4" r="2"/>
<circle cx="1352" cy="709.2" r="2"/>
<circle cx="1199.4" cy="664.3" r="2"/>
<circle cx="1145.4" cy="678.4" r="2"/>
<circle cx="1680" cy="676.2" r="2"/>
<circle cx="1723.4" cy="600.3" r="2"/>
<circle cx="1511.5" cy="689.3" r="2"/>
<circle cx="1629.5" cy="690.3" r="2"/>
<circle cx="1697.4" cy="705.5" r="2"/>
<circle cx="1773.5" cy="726.2" r="2"/>
<circle cx="397.6" cy="726.4" r="2"/>
<circle cx="513.2" cy="793.4" r="2"/>
<circle cx="292.4" cy="812" r="2"/>
<circle cx="422.8" cy="861" r="2"/>
<circle cx="699.6" cy="873.3" r="2"/>
<circle cx="1061.6" cy="731.1" r="2"/>
<circle cx="859.5" cy="801.7" r="2"/>
<circle cx="795.5" cy="857.6" r="2"/>
<circle cx="1016.7" cy="829.2" r="2"/>
<circle cx="1005.2" cy="871.5" r="2"/>
<circle cx="1097.9" cy="768.9" r="2"/>
<circle cx="1091.2" cy="821.5" r="2"/>
<circle cx="1222.6" cy="761.6" r="2"/>
<circle cx="1173.3" cy="764.2" r="2"/>
<circle cx="1194.4" cy="838.6" r="2"/>
<circle cx="1202.6" cy="874.4" r="2"/>
<circle cx="1375.5" cy="792.4" r="2"/>
<circle cx="1330.4" cy="869.4" r="2"/>
<circle cx="1593.5" cy="735.5" r="2"/>
<circle cx="1501.5" cy="797.6" r="2"/>
<circle cx="1662.4" cy="828.6" r="2"/>
<circle cx="1728.6" cy="794.3" r="2"/>
<circle cx="1812" cy="805.2" r="2"/>
<circle cx="1723.6" cy="884" r="2"/>
</g>
<g fill="#525252" stroke="#e9ece9" stroke-width="2" paint-order="stroke" stroke-linejoin="round">
<text x="283.6" y="608" font-size="11" font-weight="400" textLength="17.4" lengthAdjust="spacingAndGlyphs">нка</text>
<text x="533.2" y="643" font-size="11" font-weight="400" textLength="42.3" lengthAdjust="spacingAndGlyphs">Торопец</text>
<text x="416.5" y="668" font-size="11" font-weight="400" textLength="70.1" lengthAdjust="spacingAndGlyphs">Великие Луки</text>
<text x="632" y="687" font-size="11" font-weight="400" textLength="49.8" lengthAdjust="spacingAndGlyphs">Нелидово</text>
<text x="755.3" y="554" font-size="11" font-weight="400" textLength="57.1" lengthAdjust="spacingAndGlyphs">Кувшиново</text>
<text x="838.2" y="552.6" font-size="11" font-weight="400" textLength="36.4" lengthAdjust="spacingAndGlyphs">Торжок</text>
<text x="928.9" y="581.4" font-size="11" font-weight="700" fill="#363636" textLength="29.3" lengthAdjust="spacingAndGlyphs">Тверь</text>
<text x="1041" y="603.6" font-size="11" font-weight="400" textLength="31.5" lengthAdjust="spacingAndGlyphs">Дубна</text>
<text x="1004.8" y="670.8" font-size="11" font-weight="400" textLength="24.9" lengthAdjust="spacingAndGlyphs">Клин</text>
<text x="1040" y="677.3" font-size="11" font-weight="400" textLength="45.6" lengthAdjust="spacingAndGlyphs">Дмитров</text>
<text x="786.3" y="681.7" font-size="11" font-weight="400" textLength="25.4" lengthAdjust="spacingAndGlyphs">Ржев</text>
<text x="913.7" y="718.5" font-size="11" font-weight="400" textLength="65.7" lengthAdjust="spacingAndGlyphs">Волоколамск</text>
<text x="1381" y="558.4" font-size="11" font-weight="700" fill="#363636" textLength="44.4" lengthAdjust="spacingAndGlyphs">Иваново</text>
<text x="1430.4" y="583.6" font-size="11" font-weight="400" textLength="21.0" lengthAdjust="spacingAndGlyphs">Шуя</text>
<text x="1415.2" y="663.7" font-size="11.5" font-weight="400" fill="#363636" textLength="37.3" lengthAdjust="spacingAndGlyphs">Ковров</text>
<text x="1325" y="701.2" font-size="11" font-weight="700" fill="#363636" textLength="53" lengthAdjust="spacingAndGlyphs">Владимир</text>
<text x="1203.5" y="668" font-size="11" font-weight="400" textLength="65.7" lengthAdjust="spacingAndGlyphs">Александров</text>
<text x="1107.2" y="672.3" font-size="11" font-weight="400" textLength="75.7" lengthAdjust="spacingAndGlyphs">Сергиев Посад</text>
<text x="1622.3" y="669" font-size="13" font-weight="700" fill="#363636" textLength="113.9" lengthAdjust="spacingAndGlyphs">Нижний Новгород</text>
<text x="1701.5" y="595.3" font-size="11" font-weight="400" textLength="44.0" lengthAdjust="spacingAndGlyphs">Семёнов</text>
<text x="1490.6" y="684.3" font-size="11" font-weight="400" textLength="41.7" lengthAdjust="spacingAndGlyphs">Вязники</text>
<text x="1600.2" y="703.4" font-size="11" font-weight="700" fill="#363636" textLength="59.2" lengthAdjust="spacingAndGlyphs">Дзержинск</text>
<text x="1680.4" y="699.7" font-size="11" font-weight="400" textLength="34.8" lengthAdjust="spacingAndGlyphs">Кстово</text>
<text x="1752.5" y="720.3" font-size="11" font-weight="400" textLength="42.9" lengthAdjust="spacingAndGlyphs">Лысково</text>
<text x="379.2" y="721.4" font-size="11" font-weight="400" textLength="35.8" lengthAdjust="spacingAndGlyphs">Невель</text>
<text x="496.8" y="788.7" font-size="11" font-weight="400" textLength="32.5" lengthAdjust="spacingAndGlyphs">Велиж</text>
<text x="275.5" y="807" font-size="11" font-weight="400" textLength="34.9" lengthAdjust="spacingAndGlyphs">Полоцк</text>
<text x="401.5" y="854.4" font-size="11" font-weight="700" fill="#363636" textLength="42.1" lengthAdjust="spacingAndGlyphs">Витебск</text>
<text x="488.7" y="893.5" font-size="11" font-weight="400" textLength="28.7" lengthAdjust="spacingAndGlyphs">Рудня</text>
<text x="674" y="867.2" font-size="11" font-weight="400" textLength="51" lengthAdjust="spacingAndGlyphs">Сафоново</text>
<text x="1030.8" y="723.7" font-size="11" font-weight="700" fill="#363636" textLength="60.4" lengthAdjust="spacingAndGlyphs">Зеленоград</text>
<text x="839.5" y="795.6" font-size="11" font-weight="400" textLength="39.9" lengthAdjust="spacingAndGlyphs">Гагарин</text>
<text x="777.7" y="852" font-size="11" font-weight="400" textLength="35.8" lengthAdjust="spacingAndGlyphs">Вязьма</text>
<text x="978.3" y="822.7" font-size="11" font-weight="400" textLength="75.9" lengthAdjust="spacingAndGlyphs">Наро-Фоминск</text>
<text x="982.7" y="865.7" font-size="11" font-weight="700" fill="#363636" textLength="44.3" lengthAdjust="spacingAndGlyphs">Обнинск</text>
<text x="1072.3" y="761.8" font-size="14" font-weight="700" fill="#363636" textLength="50.9" lengthAdjust="spacingAndGlyphs">Москва</text>
<text x="1066.4" y="813.9" font-size="11" font-weight="700" fill="#363636" textLength="49.7" lengthAdjust="spacingAndGlyphs">Подольск</text>
<text x="1183" y="754" font-size="11" font-weight="400" textLength="78.2" lengthAdjust="spacingAndGlyphs">Орехово-Зуево</text>
<text x="1138" y="776.7" font-size="11" font-weight="400" textLength="70.5" lengthAdjust="spacingAndGlyphs">Электросталь</text>
<text x="1161.8" y="832.5" font-size="11" font-weight="400" textLength="64.0" lengthAdjust="spacingAndGlyphs">Воскресенск</text>
<text x="1180.3" y="868.5" font-size="11.5" font-weight="400" fill="#363636" textLength="44.4" lengthAdjust="spacingAndGlyphs">Коломна</text>
<text x="1364.2" y="773.5" font-size="11" font-weight="400" textLength="24.8" lengthAdjust="spacingAndGlyphs">Гусь-</text>
<text x="1343" y="785.4" font-size="11" font-weight="400" textLength="66.1" lengthAdjust="spacingAndGlyphs">Хрустальный</text>
<text x="1295.7" y="864" font-size="11" font-weight="400" textLength="70.7" lengthAdjust="spacingAndGlyphs">Спас-Клепики</text>
<text x="1420" y="896.5" font-size="11" font-weight="700" fill="#363636" textLength="42.3" lengthAdjust="spacingAndGlyphs">Касимов</text>
<text x="1572.6" y="730" font-size="11" font-weight="400" textLength="42.8" lengthAdjust="spacingAndGlyphs">Павлово</text>
<text x="1483.7" y="790.4" font-size="11.5" font-weight="400" fill="#363636" textLength="35.8" lengthAdjust="spacingAndGlyphs">Муром</text>
<text x="1640.3" y="821.6" font-size="11.5" font-weight="400" fill="#363636" textLength="43.7" lengthAdjust="spacingAndGlyphs">Арзамас</text>
<text x="1707.6" y="788.7" font-size="11" font-weight="400" textLength="42.3" lengthAdjust="spacingAndGlyphs">Перевоз</text>
<text x="1795" y="799.5" font-size="11" font-weight="400" textLength="36" lengthAdjust="spacingAndGlyphs">Сергач</text>
<text x="1700" y="878.3" font-size="11" font-weight="400" textLength="48" lengthAdjust="spacingAndGlyphs">Лукоянов</text>
<text x="1055" y="897.5" font-size="11" font-weight="700" fill="#363636" textLength="46" lengthAdjust="spacingAndGlyphs">Серпухов</text>
<text x="1604" y="897.5" font-size="11" font-weight="400" textLength="31" lengthAdjust="spacingAndGlyphs">Саров</text>
</g>
<g fill="#363636" stroke="#363636" stroke-width="0.35">
<text x="1415.2" y="663.7" font-size="11.5" textLength="37.3" lengthAdjust="spacingAndGlyphs">Ковров</text>
<text x="1180.3" y="868.5" font-size="11.5" textLength="44.4" lengthAdjust="spacingAndGlyphs">Коломна</text>
<text x="1483.7" y="790.4" font-size="11.5" textLength="35.8" lengthAdjust="spacingAndGlyphs">Муром</text>
<text x="1640.3" y="821.6" font-size="11.5" textLength="43.7" lengthAdjust="spacingAndGlyphs">Арзамас</text>
</g>
<text x="1531" y="755" font-size="10" font-style="italic" fill="#8a93ad" text-anchor="middle" transform="rotate(-42 1531 752)" letter-spacing="0.6">р. Ока</text>
</svg>
<!-- MAP-END -->
  </div>
</div>


</body>
</html>
